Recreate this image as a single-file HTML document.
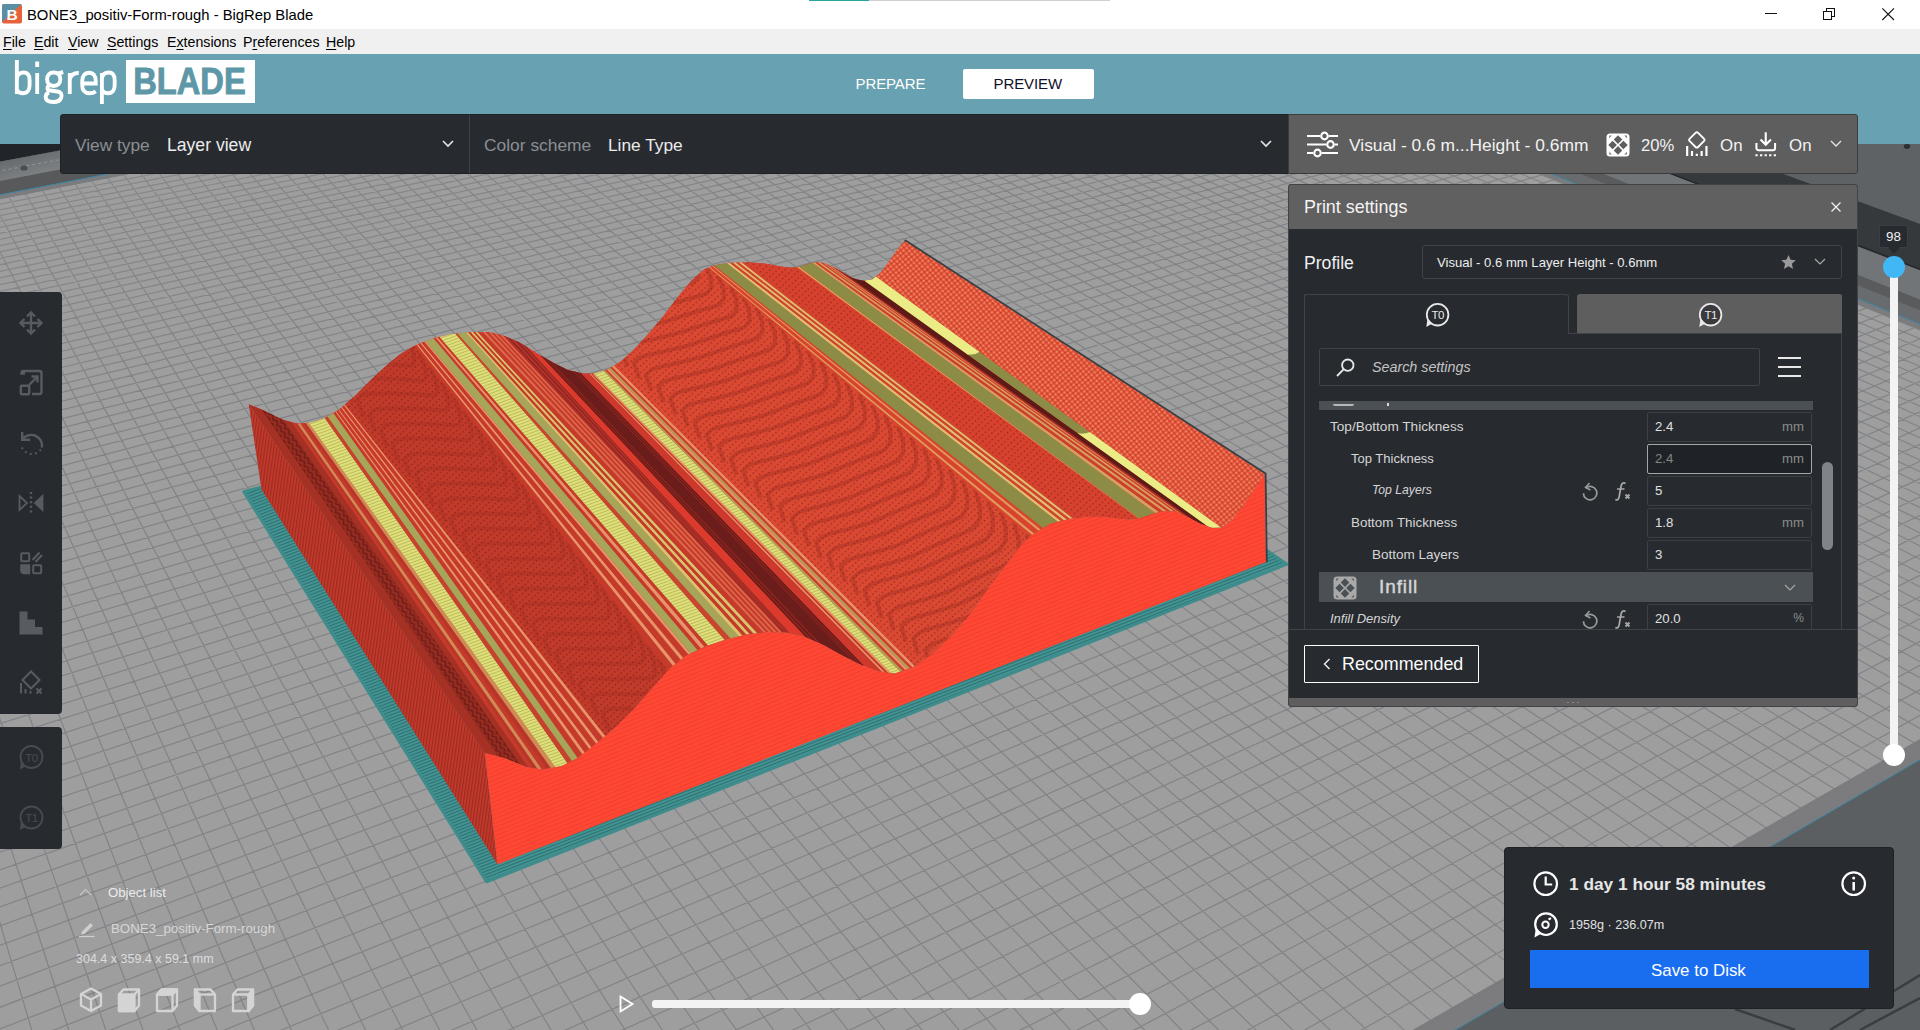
<!DOCTYPE html>
<html><head><meta charset="utf-8"><title>BigRep Blade</title>
<style>
*{box-sizing:border-box;margin:0;padding:0}
html,body{width:1920px;height:1030px;overflow:hidden;background:#9a9a9a;font-family:"Liberation Sans",sans-serif;}
.abs{position:absolute}
#titlebar{position:absolute;left:0;top:0;width:1920px;height:29px;background:#fff}
#titlebar .ttl{position:absolute;left:27px;top:6.5px;font-size:14.8px;color:#000;white-space:nowrap}
#menubar{position:absolute;left:0;top:29px;width:1920px;height:25px;background:#f0f0f0;font-size:14.2px;color:#000}
#menubar span{position:absolute;top:5px;white-space:nowrap}
#menubar u{text-decoration-thickness:1px;text-underline-offset:2px}
#header{position:absolute;left:0;top:54px;width:1920px;height:90px;background:#68a1b1}
#scene{position:absolute;left:0;top:144px;width:1920px;height:886px;overflow:hidden}
.dark{background:#272b30}
.t{position:absolute;white-space:nowrap}
#viewbar{position:absolute;left:60px;top:114px;width:1229px;height:60px;background:#272b30;border-radius:3px 0 0 3px;border:1px solid #1f2327}
#setupbar{position:absolute;left:1288px;top:114px;width:570px;height:60px;background:#5e5e5e;border:1px solid #3c3c3c;border-radius:0 3px 3px 0}
#ps{position:absolute;left:1288px;top:184px;width:570px;height:523px;background:#272b30;border:1px solid #404448;border-radius:3px;overflow:hidden}
#pshead{position:absolute;left:0;top:0;width:570px;height:44px;background:#606060}
#tools{position:absolute;left:0;top:292px;width:62px;height:422px;background:#272b30;border-radius:0 4px 4px 0}
#tools2{position:absolute;left:0;top:727px;width:62px;height:122px;background:#272b30;border-radius:0 4px 4px 0}
#save{position:absolute;left:1504px;top:847px;width:390px;height:162px;background:#272b30;border-radius:4px;border:1px solid #1e2226}
.row{position:absolute;left:0;width:570px;height:32px}
.row .lbl{position:absolute;top:8px;font-size:13.2px;color:#d6d6d6;white-space:nowrap}
.row .box{position:absolute;left:358px;top:1px;width:165px;height:30px;border:1px solid #3c4045;border-radius:2px;background:#272b30}
.row .val{position:absolute;left:366px;top:8px;font-size:13.2px;color:#e0e0e0}
.row .unit{position:absolute;right:55px;top:8px;font-size:13.2px;color:#8c8c8c}
</style></head><body>
<svg id="scn" width="1920" height="1030" viewBox="0 0 1920 1030" style="position:absolute;left:0;top:0">
<defs><clipPath id="cpPlate"><polygon points="69.9,1835.9 2360.5,503.4 1085.4,-15.8 -272.2,247.7"/></clipPath>
<linearGradient id="gFar" gradientUnits="userSpaceOnUse" x1="0" y1="160" x2="6" y2="182"><stop offset="0" stop-color="#66696b"/><stop offset="1" stop-color="#7d8082"/></linearGradient>
</defs>
<rect width="1920" height="1030" fill="#5c5f62"/>
<polygon points="-697.7,291.7 1283.1,-77.6 1283.1,-300 -697.7,-300" fill="#212529"/>
<polygon points="-703.8,315.9 1184.3,-44.7 1158.1,-54.2 -697.7,291.7" fill="url(#gFar)"/>
<polygon points="-707.9,332.6 1157.4,-29.5 1139.2,-36.5 -703.6,315.3" fill="#57595b"/>
<path d="M-150.7 199.3L347.1 105.5" stroke="#9a9c9e" stroke-width="0.8" stroke-dasharray="3 3"/>
<ellipse cx="24" cy="168" rx="3.6" ry="2.6" fill="#4a4d50"/>
<polygon points="2887.1,577.2 3230.6,287.5 1333.1,-192.3 942,-133.1" fill="#5e6264"/>
<polygon points="2835.5,620.8 2887.1,577.2 1052.1,-93 1000.1,-84.2" fill="#35393c"/>
<polygon points="2833.7,622.3 2836.4,620.1 1001,-84.3 998.4,-83.9" fill="#24282c"/>
<polygon points="2801.4,649.6 2834.2,621.9 1059.4,-60.7 1026.8,-54.8" fill="#727577"/>
<polygon points="2789.4,659.7 2801.4,649.6 1058.6,-42.2 1046.7,-40" fill="#595b5d"/>
<polygon points="2774.3,672.5 2789.8,659.4 1053.6,-37.5 1038.4,-34.6" fill="#696c6e"/>
<ellipse cx="1907" cy="146.500" rx="3.200" ry="2.400" fill="#2c3034"/>
<path d="M1735 1009l60 21M1830 1030L1920 975M1860 1030l60 -32" stroke="#3a3d40" stroke-width="2.500" fill="none"/>
<polygon points="69.9,1835.9 2360.5,503.4 1085.4,-15.8 -272.2,247.7" fill="#7c7c7e" stroke="#3c86a6" stroke-width="1"/>
<polygon points="98.9,1783.1 2336.5,500.3 1084.8,-12.3 -257,249.5" fill="#9e9e9f"/>
<path d="M101.4 1817.6L-259.9 245.3M149 1789.9L-241.1 241.7M195.5 1762.8L-222.4 238M240.9 1736.4L-203.9 234.4M285.4 1710.5L-185.6 230.9M328.9 1685.2L-167.4 227.3M371.5 1660.4L-149.3 223.8M413.3 1636.2L-131.4 220.4M454.1 1612.4L-113.6 216.9M494.1 1589.1L-95.9 213.5M533.3 1566.3L-78.4 210.1M571.7 1544L-61.1 206.7M609.3 1522.1L-43.8 203.4M646.2 1500.7L-26.7 200.1M682.3 1479.6L-9.8 196.8M717.8 1459L7 193.5M752.6 1438.8L23.7 190.3M786.7 1418.9L40.3 187M820.1 1399.5L56.8 183.9M853 1380.4L73.1 180.7M885.2 1361.6L89.3 177.5M916.9 1343.2L105.3 174.4M947.9 1325.1L121.3 171.3M978.4 1307.4L137.1 168.3M1008.4 1289.9L152.8 165.2M1037.9 1272.8L168.4 162.2M1066.8 1256L183.9 159.2M1095.2 1239.4L199.3 156.2M1123.1 1223.2L214.5 153.2M1150.6 1207.2L229.7 150.3M1177.6 1191.5L244.7 147.4M1204.1 1176.1L259.6 144.5M1230.2 1160.9L274.4 141.6M1255.9 1146L289.1 138.8M1281.1 1131.3L303.7 135.9M1305.9 1116.9L318.2 133.1M1330.4 1102.6L332.6 130.3M1354.4 1088.7L346.9 127.5M1378.1 1074.9L361.1 124.8M1401.3 1061.3L375.2 122.1M1424.3 1048L389.2 119.3M1446.8 1034.9L403.1 116.6M1469.1 1022L416.8 114M1490.9 1009.2L430.5 111.3M1512.5 996.7L444.1 108.7M1533.7 984.3L457.6 106.1M1554.6 972.2L471.1 103.4M1575.2 960.2L484.4 100.9M1595.5 948.4L497.6 98.3M1615.5 936.7L510.7 95.7M1635.2 925.3L523.8 93.2M1654.7 914L536.7 90.7M1673.8 902.8L549.6 88.2M1692.7 891.9L562.4 85.7M1711.3 881L575.1 83.3M1729.7 870.3L587.7 80.8M1747.8 859.8L600.2 78.4M1765.6 849.4L612.7 76M1783.2 839.2L625 73.6M1800.6 829.1L637.3 71.2M1817.7 819.1L649.5 68.8M1834.6 809.3L661.6 66.5M1851.3 799.6L673.7 64.1M1867.8 790L685.6 61.8M1884 780.6L697.5 59.5M1900 771.2L709.3 57.2M1915.9 762L721.1 54.9M1931.5 753L732.7 52.7M1946.9 744L744.3 50.4M1962.1 735.1L755.8 48.2M1977.1 726.4L767.2 46M1992 717.8L778.6 43.8M2006.6 709.2L789.9 41.6M2021.1 700.8L801.1 39.4M2035.4 692.5L812.2 37.2M2049.5 684.3L823.3 35.1M2063.5 676.2L834.3 33M2077.2 668.2L845.3 30.8M2090.8 660.2L856.1 28.7M2104.3 652.4L866.9 26.6M2117.6 644.7L877.7 24.5M2130.7 637.1L888.3 22.5M2143.7 629.5L898.9 20.4M2156.5 622L909.5 18.4M2169.2 614.7L919.9 16.3M2181.7 607.4L930.4 14.3M2194.1 600.2L940.7 12.3M2206.3 593.1L951 10.3M2218.4 586L961.2 8.3M2230.4 579.1L971.4 6.4M2242.3 572.2L981.5 4.4M2254 565.4L991.5 2.4M2265.5 558.6L1001.5 0.5M2277 552L1011.4 -1.4M2288.3 545.4L1021.3 -3.3M2299.5 538.9L1031.1 -5.2M2310.6 532.4L1040.8 -7.1M2321.5 526.1L1050.5 -9M2332.3 519.8L1060.1 -10.9M2343.1 513.5L1069.7 -12.7M2353.7 507.4L1079.2 -14.6M63.9 1807.9L2345.7 497.3M54.9 1766.1L2323.1 488.2M46.2 1725.7L2301 479.1M37.8 1686.6L2279.2 470.3M29.6 1648.8L2257.7 461.5M21.7 1612.2L2236.6 452.9M14.1 1576.7L2215.8 444.5M6.7 1542.4L2195.3 436.1M-0.5 1509.1L2175.1 427.9M-7.4 1476.7L2155.2 419.8M-14.2 1445.4L2135.6 411.8M-20.8 1414.9L2116.3 404M-27.1 1385.4L2097.3 396.2M-33.3 1356.6L2078.6 388.6M-39.3 1328.7L2060.2 381.1M-45.2 1301.5L2042 373.7M-50.9 1275.1L2024 366.4M-56.4 1249.4L2006.4 359.2M-61.8 1224.3L1988.9 352.1M-67.1 1199.9L1971.7 345.1M-72.2 1176.2L1954.8 338.2M-77.2 1153L1938.1 331.4M-82.1 1130.4L1921.6 324.7M-86.8 1108.4L1905.4 318.1M-91.4 1086.9L1889.3 311.5M-95.9 1066L1873.5 305.1M-100.3 1045.5L1857.9 298.7M-104.7 1025.5L1842.5 292.5M-108.9 1006L1827.3 286.3M-113 986.9L1812.3 280.2M-117 968.3L1797.5 274.2M-120.9 950.1L1782.9 268.2M-124.7 932.3L1768.4 262.3M-128.5 914.9L1754.2 256.5M-132.2 897.9L1740.1 250.8M-135.7 881.2L1726.3 245.2M-139.3 864.9L1712.5 239.6M-142.7 848.9L1699 234.1M-146.1 833.3L1685.6 228.6M-149.4 818L1672.4 223.2M-152.6 803L1659.4 217.9M-155.8 788.3L1646.5 212.7M-158.9 773.9L1633.8 207.5M-161.9 759.8L1621.2 202.4M-164.9 746L1608.7 197.3M-167.8 732.4L1596.5 192.3M-170.7 719.1L1584.3 187.4M-173.5 706.1L1572.3 182.5M-176.2 693.3L1560.5 177.7M-178.9 680.7L1548.7 172.9M-181.6 668.4L1537.2 168.2M-184.2 656.3L1525.7 163.5M-186.8 644.4L1514.4 158.9M-189.3 632.8L1503.2 154.3M-191.7 621.3L1492.1 149.8M-194.2 610L1481.2 145.4M-196.5 599L1470.4 141M-198.9 588.1L1459.7 136.6M-201.2 577.5L1449.1 132.3M-203.4 567L1438.6 128M-205.7 556.7L1428.2 123.8M-207.9 546.5L1418 119.6M-210 536.5L1407.9 115.5M-212.1 526.7L1397.8 111.4M-214.2 517.1L1387.9 107.4M-216.2 507.6L1378.1 103.4M-218.2 498.3L1368.4 99.5M-220.2 489.1L1358.8 95.5M-222.2 480.1L1349.3 91.7M-224.1 471.2L1339.9 87.8M-226 462.4L1330.6 84M-227.8 453.8L1321.3 80.3M-229.7 445.3L1312.2 76.6M-231.5 436.9L1303.2 72.9M-233.2 428.7L1294.3 69.3M-235 420.6L1285.4 65.7M-236.7 412.6L1276.6 62.1M-238.4 404.8L1268 58.6M-240.1 397L1259.4 55.1M-241.7 389.4L1250.9 51.6M-243.3 381.9L1242.5 48.2M-244.9 374.4L1234.1 44.8M-246.5 367.1L1225.9 41.4M-248.1 359.9L1217.7 38.1M-249.6 352.8L1209.6 34.8M-251.1 345.8L1201.6 31.5M-252.6 338.9L1193.6 28.3M-254.1 332.1L1185.8 25.1M-255.5 325.4L1178 21.9M-256.9 318.7L1170.3 18.8M-258.3 312.2L1162.6 15.7M-259.7 305.8L1155 12.6M-261.1 299.4L1147.5 9.5M-262.5 293.1L1140.1 6.5M-263.8 286.9L1132.7 3.5M-265.1 280.8L1125.4 0.5M-266.4 274.8L1118.2 -2.4M-267.7 268.8L1111 -5.3M-269 262.9L1103.9 -8.2M-270.2 257.1L1096.9 -11.1M-271.4 251.4L1089.9 -13.9" stroke="#797b7e" stroke-opacity=".78" stroke-width="1.200" fill="none" clip-path="url(#cpPlate)"/>
<linearGradient id="gFade" gradientUnits="userSpaceOnUse" x1="0" y1="150" x2="60" y2="430"><stop offset="0" stop-color="#9c9c9d" stop-opacity=".2"/><stop offset="1" stop-color="#9c9c9d" stop-opacity="0"/></linearGradient>
<polygon points="98.9,1783.1 2336.5,500.3 1084.8,-12.3 -257,249.5" fill="url(#gFade)"/>
<defs>
<pattern id="pFront" width="4" height="4" patternUnits="userSpaceOnUse" patternTransform="rotate(-22)"><rect width="4" height="4" fill="#ff4733"/><rect width="4" height="1" fill="#f0402e"/></pattern>
<pattern id="pLeft" width="3" height="3" patternUnits="userSpaceOnUse" patternTransform="rotate(8)"><rect width="3" height="3" fill="#c63a2b"/><rect width="1.300" height="3" fill="#9c2c22"/></pattern>
<pattern id="pTeal" width="3" height="3" patternUnits="userSpaceOnUse" patternTransform="rotate(-21)"><rect width="3" height="3" fill="#449595"/><rect width="3" height="1.100" fill="#2e7070"/></pattern>
<pattern id="pDot" width="5" height="4" patternUnits="userSpaceOnUse" patternTransform="rotate(48)"><rect width="5" height="4" fill="none"/><rect width="1.300" height="1.500" fill="#5a1511" fill-opacity=".55"/></pattern>
<pattern id="pDotL" width="4" height="4" patternUnits="userSpaceOnUse" patternTransform="rotate(50)"><rect width="1.600" height="1.600" fill="#f6b27a" fill-opacity=".75"/><rect x="2" y="2" width="1.300" height="1.300" fill="#7a1c16" fill-opacity=".5"/></pattern>
<pattern id="pYel" width="4" height="3" patternUnits="userSpaceOnUse" patternTransform="rotate(-20)"><rect width="4" height="3" fill="none"/><rect width="4" height="1" fill="#8c8c3a" fill-opacity=".45"/></pattern>
<pattern id="pChev" width="7" height="5" patternUnits="userSpaceOnUse" patternTransform="rotate(56)"><path d="M0 0.500l3.500 3l3.500-3" fill="none" stroke="#5e1814" stroke-width="1.600"/></pattern>
</defs>
<polygon points="486.7,881.9 1286.9,564.2 912.9,305.7 243.8,491.8" fill="url(#pTeal)" stroke="#3f8c8c" stroke-width="3" stroke-linejoin="round"/>
<polygon points="248.7,404.3 484.9,753.1 497.5,864.4 261.5,489.5" fill="url(#pLeft)"/>
<polygon points="248.7,404.3 252.8,406 257,407.6 261.1,409.3 265.2,411.2 269.3,413.2 273.5,415.3 277.6,417.4 281.7,419.3 285.8,420.5 290,421.6 294.1,422.8 298.2,423.6 302.3,423.3 306.5,423 310.6,422.6 314.7,421.4 318.8,420 323,418.6 327.1,416.7 331.2,414.2 335.4,411.8 339.5,409.2 343.6,405.7 347.7,402.1 351.9,398.6 356,394.9 360.1,390.8 364.2,386.6 368.4,382.4 372.5,378.4 376.6,374.6 380.7,370.8 384.9,367 389,363.4 393.1,360 397.3,356.5 401.4,353.3 405.5,351 409.6,348.6 413.8,346.3 417.9,344.2 422,342.6 426.1,341.1 430.3,339.5 434.4,338 438.5,337 442.6,336.1 446.8,335.2 450.9,334.4 455,333.7 459.1,333.3 463.3,332.9 467.4,332.5 471.5,332.1 475.7,332.1 479.8,332.1 483.9,332.1 488,332.1 492.2,332.7 496.3,333.7 500.4,334.7 504.5,335.9 508.7,337.7 512.8,339.5 516.9,341.3 521,343.3 525.2,345.9 529.3,348.5 533.4,351.1 537.5,353.7 541.7,356 545.8,358.4 549.9,360.7 554.1,363 558.2,365.1 562.3,367.2 566.4,369.3 570.6,370.6 574.7,371.6 578.8,372.6 582.9,373.4 587.1,373.5 591.2,373.7 595.3,373.1 599.4,372 603.6,370.8 607.7,369.3 611.8,366.9 616,364.5 620.1,362.1 624.2,358.4 628.3,354.7 632.5,350.9 636.6,346.7 640.7,342.2 644.8,337.7 649,333.2 653.1,328.3 657.2,323.5 661.3,318.7 665.5,313.3 669.6,307.8 673.7,302.4 677.8,297 682,291.8 686.1,287 690.2,282.2 694.4,278 698.5,274.4 702.6,270.7 706.7,268.2 710.9,266.7 715,265.3 719.1,264.3 723.2,263.8 727.4,263.3 731.5,262.8 735.6,262.7 739.7,262.5 743.9,262.4 748,262.3 752.1,262.6 756.2,262.9 760.4,263.3 764.5,263.6 768.6,264.2 772.8,265 776.9,265.8 781,266.5 785.1,267 789.3,267.6 793.4,267.7 797.5,266.9 801.6,266 805.8,264.6 809.9,263.3 814,262.7 818.1,262.5 822.3,262.5 826.4,264.1 830.5,265.7 834.7,267.7 838.8,270.1 842.9,272.5 847,274.9 851.2,277.3 855.3,279 859.4,279.9 863.5,280.8 867.7,280.2 871.8,279.5 875.9,276.6 880,273.3 884.2,268.2 888.3,262.5 892.4,256.7 896.5,250.9 900.7,245.5 904.8,240.6 1264.8,474 1259.9,481.7 1255,488.4 1250.1,495.4 1245.2,502.8 1240.3,509.8 1235.4,515.9 1230.5,521.3 1225.6,524.9 1220.7,527.5 1215.7,527.7 1210.8,527.3 1205.9,525.7 1201,524 1196.1,521.5 1191.2,518.8 1186.3,516.3 1181.4,514 1176.5,511.8 1171.6,511.3 1166.7,511.1 1161.8,511.5 1156.9,512.7 1152,514 1147.1,515.6 1142.2,517.3 1137.3,518.9 1132.4,519.3 1127.5,519.6 1122.6,519 1117.6,518.4 1112.7,517.8 1107.8,517.2 1102.9,517 1098,516.8 1093.1,516.7 1088.2,516.6 1083.3,517.2 1078.4,517.8 1073.5,518.4 1068.6,519.1 1063.7,520.3 1058.8,521.6 1053.9,522.8 1049,524.4 1044.1,527.4 1039.2,530.5 1034.3,533.6 1029.4,537.1 1024.5,542.4 1019.5,547.8 1014.6,553.4 1009.7,559.9 1004.8,566.5 999.9,573.1 995,579.6 990.1,586.1 985.2,592.8 980.3,599.8 975.4,606.8 970.5,613.8 965.6,619.6 960.7,625.2 955.8,630.8 950.9,636.1 946,641 941.1,645.9 936.2,650.8 931.3,655.1 926.4,658.5 921.4,661.9 916.5,665.2 911.6,667.8 906.7,669.5 901.8,671.1 896.9,672.8 892,673.5 887.1,672.6 882.2,671.7 877.3,670.8 872.4,669 867.5,667.1 862.6,665.3 857.7,663.2 852.8,660.8 847.9,658.3 843,655.8 838.1,653.2 833.2,650.4 828.3,647.7 823.3,645 818.4,642.8 813.5,640.6 808.6,638.5 803.7,636.5 798.8,635.4 793.9,634.2 789,633.1 784.1,632.5 779.2,632.3 774.3,632.2 769.4,632.1 764.5,632.5 759.6,633.1 754.7,633.7 749.8,634.2 744.9,634.8 740,636.1 735.1,637.4 730.2,638.7 725.2,640 720.3,641.4 715.4,643.1 710.5,644.7 705.6,646.4 700.7,648.5 695.8,650.9 690.9,653.4 686,655.8 681.1,659.5 676.2,663.4 671.3,667.3 666.4,672.2 661.5,677.8 656.6,683.4 651.7,688.9 646.8,694.5 641.9,700 637,705.5 632.1,710.6 627.1,715.6 622.2,720.5 617.3,725.4 612.4,729.7 607.5,734 602.6,738.3 597.7,742.6 592.8,746.4 587.9,750.2 583,754 578.1,757.8 573.2,760.4 568.3,762.8 563.4,765.3 558.5,766.7 553.6,767.6 548.7,768.6 543.8,769.5 538.9,769 534,768.3 529,767.6 524.1,766 519.2,764.1 514.3,762.1 509.4,760.1 504.5,758.1 499.6,756.9 494.7,755.6 489.8,754.4 484.9,753.1" fill="#d0412e"/>
<polygon points="248.7,404.3 253.5,406.2 258.3,408.2 263.1,410.1 267.9,412.5 272.8,415 277.6,417.4 282.4,419.5 287.2,420.9 292,422.2 528.5,767.5 523.7,765.8 518.8,763.9 514,761.9 509.1,760 504.3,758.1 499.4,756.8 494.6,755.6 489.7,754.3 484.9,753.1" fill="#a53125"/>
<polygon points="292,422.2 294.8,423 533,768.1 528.5,767.5" fill="#c43a2b"/>
<polygon points="294.8,423 297.6,423.7 537.5,768.8 533,768.1" fill="#b83629"/>
<polygon points="297.6,423.7 300.4,423.5 542,769.4 537.5,768.8" fill="#cf8a55"/>
<polygon points="300.4,423.5 303.1,423.2 546.4,769 542,769.4" fill="#c43a2b"/>
<polygon points="303.1,423.2 305.9,423 550.9,768.1 546.4,769" fill="#b83629"/>
<polygon points="305.9,423 308.7,422.8 555.4,767.3 550.9,768.1" fill="#cf8a55"/>
<polygon points="308.7,422.8 312.7,422 316.8,420.7 320.8,419.3 324.8,418 567.5,763.2 564.4,764.7 561.4,766.1 558.4,766.7 555.4,767.3" fill="#e0e07a"/>
<polygon points="324.8,418 327.5,416.4 572,761 567.5,763.2" fill="#c5422f"/>
<polygon points="327.5,416.4 330.5,414.7 333.5,412.9 577.9,757.9 574.9,759.5 572,761" fill="#a6a55a"/>
<polygon points="333.5,412.9 334.5,412.4 580.2,756.2 577.9,757.9" fill="#c43a2b"/>
<polygon points="334.5,412.4 335.4,411.8 582.5,754.4 580.2,756.2" fill="#c43a2b"/>
<polygon points="335.4,411.8 336.4,411.2 584.8,752.6 582.5,754.4" fill="#e8946a"/>
<polygon points="336.4,411.2 337.3,410.7 587.1,750.8 584.8,752.6" fill="#c43a2b"/>
<polygon points="337.3,410.7 338.3,410.1 589.4,749.1 587.1,750.8" fill="#c43a2b"/>
<polygon points="338.3,410.1 339.2,409.4 591.6,747.3 589.4,749.1" fill="#e8946a"/>
<polygon points="339.2,409.4 340.2,408.5 593.9,745.5 591.6,747.3" fill="#c43a2b"/>
<polygon points="340.2,408.5 341.2,407.7 596.2,743.7 593.9,745.5" fill="#c43a2b"/>
<polygon points="341.2,407.7 342.1,406.9 598.5,741.9 596.2,743.7" fill="#e8946a"/>
<polygon points="342.1,406.9 343.1,406.1 600.8,739.9 598.5,741.9" fill="#c43a2b"/>
<polygon points="343.1,406.1 344,405.3 603.1,737.9 600.8,739.9" fill="#c43a2b"/>
<polygon points="344,405.3 345,404.5 605.4,735.9 603.1,737.9" fill="#e8946a"/>
<polygon points="345,404.5 349.9,400.3 354.9,396 359.8,391.1 364.7,386.1 369.6,381.2 374.6,376.5 379.5,372 384.4,367.4 389.4,363.1 394.3,359 399.2,354.9 404.1,351.8 409.1,348.9 414,346.1 668,670.4 663.5,675.5 659.1,680.6 654.6,685.6 650.1,690.7 645.6,695.7 641.2,700.8 636.7,705.8 632.2,710.5 627.7,715 623.3,719.4 618.8,723.9 614.3,728.1 609.8,732 605.4,735.9" fill="#c13a2a"/>
<polygon points="414,346.1 415.3,345.4 670.5,667.9 668,670.4" fill="#c43a2b"/>
<polygon points="415.3,345.4 416.6,344.7 673.1,665.9 670.5,667.9" fill="#c43a2b"/>
<polygon points="416.6,344.7 417.9,344.2 675.6,663.8 673.1,665.9" fill="#e8946a"/>
<polygon points="417.9,344.2 419.2,343.7 678.2,661.8 675.6,663.8" fill="#c43a2b"/>
<polygon points="419.2,343.7 420.4,343.2 680.7,659.8 678.2,661.8" fill="#c43a2b"/>
<polygon points="420.4,343.2 421.7,342.7 683.3,657.8 680.7,659.8" fill="#e8946a"/>
<polygon points="421.7,342.7 423,342.2 685.8,655.9 683.3,657.8" fill="#c43a2b"/>
<polygon points="423,342.2 424.3,341.8 688.4,654.6 685.8,655.9" fill="#c43a2b"/>
<polygon points="424.3,341.8 425.6,341.3 690.9,653.4 688.4,654.6" fill="#e8946a"/>
<polygon points="425.6,341.3 429.6,339.8 433.6,338.3 697.6,650.1 694.2,651.7 690.9,653.4" fill="#a6a55a"/>
<polygon points="433.6,338.3 435.5,337.6 701,648.4 697.6,650.1" fill="#c43a2b"/>
<polygon points="435.5,337.6 437.5,337.2 704.5,646.8 701,648.4" fill="#e8946a"/>
<polygon points="437.5,337.2 439.4,336.8 708,645.6 704.5,646.8" fill="#c43a2b"/>
<polygon points="439.4,336.8 443.4,336 447.4,335.1 451.4,334.3 455.4,333.7 724.8,640.1 720.6,641.3 716.4,642.7 712.2,644.1 708,645.6" fill="#e0e07a"/>
<polygon points="455.4,333.7 457.5,333.5 730.5,638.6 724.8,640.1" fill="#c8452f"/>
<polygon points="457.5,333.5 461.8,333.1 466,332.6 738.9,636.4 734.7,637.5 730.5,638.6" fill="#a6a55a"/>
<polygon points="466,332.6 468.3,332.4 742.6,635.4 738.9,636.4" fill="#d8c46e"/>
<polygon points="468.3,332.4 470.7,332.2 746.3,634.6 742.6,635.4" fill="#c43a2b"/>
<polygon points="470.7,332.2 473,332.1 750,634.2 746.3,634.6" fill="#d8c46e"/>
<polygon points="473,332.1 475.3,332.1 753.7,633.8 750,634.2" fill="#c43a2b"/>
<polygon points="475.3,332.1 477.7,332.1 757.4,633.3 753.7,633.8" fill="#d8c46e"/>
<polygon points="477.7,332.1 480,332.1 761.1,632.9 757.4,633.3" fill="#c43a2b"/>
<polygon points="480,332.1 482.9,332.1 763.7,632.6 761.1,632.9" fill="#c53a2b"/>
<polygon points="482.9,332.1 485.8,332.1 766.3,632.3 763.7,632.6" fill="#dc6a4c"/>
<polygon points="485.8,332.1 488.6,332.1 768.9,632.1 766.3,632.3" fill="#c53a2b"/>
<polygon points="488.6,332.1 491.5,332.5 771.5,632.2 768.9,632.1" fill="#dc6a4c"/>
<polygon points="491.5,332.5 494.4,333.2 774.2,632.2 771.5,632.2" fill="#c53a2b"/>
<polygon points="494.4,333.2 497.2,333.9 776.8,632.3 774.2,632.2" fill="#dc6a4c"/>
<polygon points="497.2,333.9 500.1,334.7 779.4,632.3 776.8,632.3" fill="#c53a2b"/>
<polygon points="500.1,334.7 503,335.4 782,632.4 779.4,632.3" fill="#dc6a4c"/>
<polygon points="503,335.4 507,337 783.3,632.4 782,632.4" fill="#b3302a"/>
<polygon points="507,337 511,338.7 784.7,632.5 783.3,632.4" fill="#8a2621"/>
<polygon points="511,338.7 515,340.4 786,632.5 784.7,632.5" fill="#b3302a"/>
<polygon points="515,340.4 519,342.1 787.3,632.7 786,632.5" fill="#8a2621"/>
<polygon points="519,342.1 523,344.5 788.7,633 787.3,632.7" fill="#b3302a"/>
<polygon points="523,344.5 527,347.1 790,633.3 788.7,633" fill="#8a2621"/>
<polygon points="527,347.1 531.7,350 536.3,352.9 541,355.7 806,637.3 800.7,635.8 795.3,634.6 790,633.3" fill="#dd3a2e"/>
<polygon points="541,355.7 545.4,358.2 549.9,360.7 554.3,363.2 558.8,365.4 563.2,367.6 567.7,369.9 572.1,371 576.6,372.1 581,373.2 864,665.8 857.6,663.2 851.1,659.9 844.7,656.7 838.2,653.3 831.8,649.7 825.3,646.1 818.9,642.9 812.4,640.1 806,637.3" fill="#6a1d1a"/>
<polygon points="541,355.7 543.5,357.1 809.6,638.9 806,637.3" fill="#6a1d1a"/>
<polygon points="543.5,357.1 546,358.5 813.2,640.5 809.6,638.9" fill="#8e2722"/>
<polygon points="546,358.5 548.5,359.9 816.9,642.1 813.2,640.5" fill="#6a1d1a"/>
<polygon points="548.5,359.9 551,361.3 820.5,643.7 816.9,642.1" fill="#8e2722"/>
<polygon points="573,371.2 575,371.7 855.3,662 852.4,660.6" fill="#8e2722"/>
<polygon points="575,371.7 577,372.2 858.2,663.5 855.3,662" fill="#6a1d1a"/>
<polygon points="577,372.2 579,372.7 861.1,664.8 858.2,663.5" fill="#8e2722"/>
<polygon points="579,372.7 581,373.2 864,665.8 861.1,664.8" fill="#6a1d1a"/>
<polygon points="581,373.2 585.3,373.5 589.7,373.7 594,373.5 891.1,673.3 882.1,671.7 873,669.2 864,665.8" fill="#cf382c"/>
<polygon points="588.1,373.6 589.6,373.7 882,671.7 878.9,671.2" fill="#c43a2b"/>
<polygon points="589.6,373.7 591.1,373.7 885,672.2 882,671.7" fill="#e8946a"/>
<polygon points="591.1,373.7 592.5,373.8 888.1,672.8 885,672.2" fill="#c43a2b"/>
<polygon points="592.5,373.8 594,373.5 891.1,673.3 888.1,672.8" fill="#e8946a"/>
<polygon points="594,373.5 598.8,372.1 603.5,370.8 900.3,671.6 895.7,673.2 891.1,673.3" fill="#e0e07a"/>
<polygon points="603.5,370.8 605.2,370.3 902.8,670.8 900.3,671.6" fill="#b0a055"/>
<polygon points="605.2,370.3 607,369.7 905.2,670 902.8,670.8" fill="#c9412e"/>
<polygon points="607,369.7 608.8,368.7 907.7,669.2 905.2,670" fill="#e8946a"/>
<polygon points="608.8,368.7 610.5,367.7 910.1,668.3 907.7,669.2" fill="#b0a055"/>
<polygon points="610.5,367.7 612.2,366.7 912.6,667.5 910.1,668.3" fill="#c9412e"/>
<polygon points="612.2,366.7 614,365.6 915,666.3 912.6,667.5" fill="#e8946a"/>
<polygon points="614,365.6 618.9,362.7 623.9,358.7 628.8,354.2 633.8,349.7 638.7,344.4 643.7,339 648.6,333.5 653.6,327.8 658.5,322 663.5,315.9 668.4,309.3 673.4,302.9 678.3,296.4 683.3,290.3 688.2,284.6 693.2,279 698.1,274.7 703.1,270.3 708,267.7 1030,536.4 1023.9,543 1017.9,549.5 1011.8,557.1 1005.8,565.2 999.7,573.3 993.7,581.4 987.6,589.4 981.6,598 975.5,606.6 969.5,615.2 963.4,622.1 957.4,629 951.3,635.7 945.3,641.7 939.2,647.8 933.2,653.8 927.1,657.9 921.1,662.1 915,666.3" fill="#dc4933"/>
<polygon points="708,267.7 709.1,267.4 1032.2,534.9 1030,536.4" fill="#d9442f"/>
<polygon points="709.1,267.4 710.2,267 1034.3,533.5 1032.2,534.9" fill="#e09a5c"/>
<polygon points="710.2,267 711.2,266.6 1036.5,532.2 1034.3,533.5" fill="#d9442f"/>
<polygon points="711.2,266.6 712.3,266.2 1038.6,530.8 1036.5,532.2" fill="#d9442f"/>
<polygon points="712.3,266.2 713.4,265.8 1040.8,529.5 1038.6,530.8" fill="#e09a5c"/>
<polygon points="713.4,265.8 714.5,265.4 1042.9,528.1 1040.8,529.5" fill="#d9442f"/>
<polygon points="714.5,265.4 718.7,264.4 722.8,263.8 727,263.3 1058,521.8 1053,523 1048,525 1042.9,528.1" fill="#8c8c46"/>
<polygon points="727,263.3 730,262.9 1061,521 1058,521.8" fill="#dfc070"/>
<polygon points="730,262.9 733,262.7 1064,520.2 1061,521" fill="#cf4530"/>
<polygon points="733,262.7 736,262.7 1067,519.5 1064,520.2" fill="#dfc070"/>
<polygon points="736,262.7 739,262.6 1070,518.8 1067,519.5" fill="#cf4530"/>
<polygon points="739,262.6 742,262.5 1073,518.4 1070,518.8" fill="#dfc070"/>
<polygon points="742,262.5 745,262.4 1076,518.1 1073,518.4" fill="#cf4530"/>
<polygon points="745,262.4 749.5,262.4 754.1,262.8 758.6,263.1 763.2,263.5 767.7,264.1 772.3,264.9 776.8,265.7 781.4,266.5 785.9,267.2 790.5,267.8 795,267.4 1138,518.7 1132.4,519.3 1126.7,519.5 1121.1,518.8 1115.5,518.1 1109.8,517.4 1104.2,517.1 1098.5,516.9 1092.9,516.6 1087.3,516.7 1081.6,517.4 1076,518.1" fill="#d8412e"/>
<polygon points="795,267.4 797,267 1138.6,518.5 1138,518.7" fill="#d9442f"/>
<polygon points="797,267 799,266.6 1139.1,518.3 1138.6,518.5" fill="#e0a060"/>
<polygon points="799,266.6 803.5,265.4 808,263.9 812.5,262.7 1155.3,513.1 1149.9,514.7 1144.5,516.5 1139.1,518.3" fill="#8c8c46"/>
<polygon points="812.5,262.7 815.2,262.6 1159.2,512.1 1155.3,513.1" fill="#d6a060"/>
<polygon points="815.2,262.6 817.9,262.5 1163,511.2 1159.2,512.1" fill="#cc3f2d"/>
<polygon points="817.9,262.5 820.6,262.4 1166.8,511.1 1163,511.2" fill="#d6a060"/>
<polygon points="820.6,262.4 823.2,262.9 1170.7,511.3 1166.8,511.1" fill="#cc3f2d"/>
<polygon points="823.2,262.9 825.9,263.9 1174.5,511.5 1170.7,511.3" fill="#d6a060"/>
<polygon points="825.9,263.9 828.6,264.9 1178.3,512.6 1174.5,511.5" fill="#cc3f2d"/>
<polygon points="828.6,264.9 831.3,266 1182.2,514.4 1178.3,512.6" fill="#d6a060"/>
<polygon points="831.3,266 834,267.3 1186,516.1 1182.2,514.4" fill="#cc3f2d"/>
<polygon points="834,267.3 838.2,269.8 842.5,272.3 846.8,274.8 851,277.2 1198,522.5 1195,520.9 1192,519.2 1189,517.6 1186,516.1" fill="#c03a2c"/>
<polygon points="842.5,272.3 846.9,274.8 851.3,277.4 855.7,279 860.1,280 864.5,280.7 1208,526.4 1204.8,525.3 1201.6,524.2 1198.4,522.7 1195.2,521 1192,519.2" fill="#5e1a17"/>
<polygon points="834,267.3 838.2,269.8 842.5,272.3 1192,519.2 1189,517.6 1186,516.1" fill="#8f2a22"/>
<polygon points="864.5,280.7 868.3,280.1 872.2,279.4 876,276.5 1221.2,527.5 1216.8,527.7 1212.4,527.8 1208,526.4" fill="#8c8c46"/>
<polygon points="864.5,280.7 868.3,280.1 872.2,279.4 876,276.5 979.6,351.8 975.6,353.9 971.6,354.4 967.6,354.4" fill="#ecec86"/>
<polygon points="1077.5,433 1081.7,433.7 1085.9,433.3 1090.1,432.1 1221.2,527.5 1216.8,527.7 1212.4,527.8 1208,526.4" fill="#ecec86"/>
<polygon points="876,276.5 880.8,272.7 885.6,266.2 890.4,259.5 895.2,252.8 900,246.3 904.8,240.6 1264.8,474 1257.5,484.9 1250.3,495.1 1243,506 1235.8,515.4 1228.5,522.7 1221.2,527.5" fill="#e3523a"/>
<polygon points="876,276.5 878.6,274.5 881.2,272.3 883.9,268.7 886.5,265 889.1,261.3 891.7,257.7 894.3,254 896.9,250.3 899.6,246.8 902.2,243.7 904.8,240.6 1264.8,474 1260.8,480.4 1256.9,485.8 1252.9,491.3 1249,497.1 1245,503 1241,508.8 1237.1,513.8 1233.1,518.7 1229.2,522.2 1225.2,525.2 1221.2,527.5" fill="url(#pDotL)"/>
<polygon points="345,404.5 347.4,402.4 349.8,400.4 352.1,398.4 354.5,396.4 356.9,394 359.3,391.6 361.7,389.2 364,386.8 366.4,384.4 368.8,382 371.2,379.7 373.6,377.5 375.9,375.3 378.3,373.1 380.7,370.9 383.1,368.7 385.4,366.5 387.8,364.4 390.2,362.4 392.6,360.4 395,358.4 397.3,356.4 399.7,354.5 402.1,352.9 404.5,351.6 406.9,350.2 409.2,348.8 411.6,347.5 414,346.1 668,670.4 665.8,672.8 663.7,675.3 661.5,677.8 659.4,680.2 657.2,682.7 655,685.1 652.9,687.6 650.7,690 648.6,692.4 646.4,694.9 644.2,697.3 642.1,699.7 639.9,702.2 637.8,704.6 635.6,707 633.4,709.3 631.3,711.4 629.1,713.6 627,715.7 624.8,717.9 622.6,720.1 620.5,722.2 618.3,724.4 616.2,726.5 614,728.4 611.8,730.2 609.7,732.1 607.5,734 605.4,735.9" fill="url(#pDot)"/>
<polygon points="614,365.6 616.4,364.2 618.8,362.8 621.2,361.1 623.6,358.9 626.1,356.7 628.5,354.5 630.9,352.3 633.3,350.1 635.7,347.7 638.1,345.1 640.5,342.4 642.9,339.8 645.3,337.2 647.7,334.6 650.2,331.8 652.6,329 655,326.1 657.4,323.3 659.8,320.5 662.2,317.6 664.6,314.4 667,311.2 669.4,308 671.8,304.9 674.3,301.7 676.7,298.5 679.1,295.4 681.5,292.4 683.9,289.6 686.3,286.8 688.7,284 691.1,281.2 693.5,278.7 695.9,276.6 698.4,274.5 700.8,272.4 703.2,270.2 705.6,268.6 708,267.7 1030,536.4 1027.1,539.6 1024.1,542.8 1021.2,546 1018.2,549.2 1015.3,552.6 1012.3,556.5 1009.4,560.5 1006.4,564.4 1003.5,568.3 1000.5,572.3 997.6,576.2 994.6,580.1 991.7,584 988.7,588 985.8,592 982.8,596.2 979.9,600.4 976.9,604.6 974,608.8 971,613 968.1,616.8 965.1,620.1 962.2,623.5 959.2,626.9 956.3,630.2 953.3,633.6 950.4,636.6 947.4,639.6 944.5,642.5 941.5,645.5 938.6,648.4 935.6,651.4 932.7,654.1 929.7,656.1 926.8,658.2 923.8,660.2 920.9,662.2 917.9,664.3 915,666.3" fill="url(#pDot)"/>
<polygon points="745,262.4 747.6,262.3 750.3,262.4 752.9,262.7 755.5,262.9 758.2,263.1 760.8,263.3 763.4,263.5 766.1,263.7 768.7,264.2 771.3,264.7 773.9,265.2 776.6,265.7 779.2,266.2 781.8,266.6 784.5,267 787.1,267.3 789.7,267.7 792.4,267.9 795,267.4 1138,518.7 1134.7,519.1 1131.5,519.3 1128.2,519.6 1124.9,519.3 1121.7,518.9 1118.4,518.5 1115.2,518.1 1111.9,517.7 1108.6,517.3 1105.4,517.1 1102.1,517 1098.8,516.9 1095.6,516.7 1092.3,516.6 1089.1,516.5 1085.8,516.9 1082.5,517.3 1079.3,517.7 1076,518.1" fill="url(#pDot)"/>
<polygon points="308.7,422.8 312.7,422 316.8,420.7 320.8,419.3 324.8,418 567.5,763.2 564.4,764.7 561.4,766.1 558.4,766.7 555.4,767.3" fill="url(#pYel)"/>
<polygon points="439.4,336.8 443.4,336 447.4,335.1 451.4,334.3 455.4,333.7 724.8,640.1 720.6,641.3 716.4,642.7 712.2,644.1 708,645.6" fill="url(#pYel)"/>
<polygon points="594,373.5 598.8,372.1 603.5,370.8 900.3,671.6 895.7,673.2 891.1,673.3" fill="url(#pYel)"/>
<clipPath id="cpA2"><polygon points="614,365.6 616.4,364.2 618.8,362.8 621.2,361.1 623.6,358.9 626.1,356.7 628.5,354.5 630.9,352.3 633.3,350.1 635.7,347.7 638.1,345.1 640.5,342.4 642.9,339.8 645.3,337.2 647.7,334.6 650.2,331.8 652.6,329 655,326.1 657.4,323.3 659.8,320.5 662.2,317.6 664.6,314.4 667,311.2 669.4,308 671.8,304.9 674.3,301.7 676.7,298.5 679.1,295.4 681.5,292.4 683.9,289.6 686.3,286.8 688.7,284 691.1,281.2 693.5,278.7 695.9,276.6 698.4,274.5 700.8,272.4 703.2,270.2 705.6,268.6 708,267.7 1030,536.4 1027.1,539.6 1024.1,542.8 1021.2,546 1018.2,549.2 1015.3,552.6 1012.3,556.5 1009.4,560.5 1006.4,564.4 1003.5,568.3 1000.5,572.3 997.6,576.2 994.6,580.1 991.7,584 988.7,588 985.8,592 982.8,596.2 979.9,600.4 976.9,604.6 974,608.8 971,613 968.1,616.8 965.1,620.1 962.2,623.5 959.2,626.9 956.3,630.2 953.3,633.6 950.4,636.6 947.4,639.6 944.5,642.5 941.5,645.5 938.6,648.4 935.6,651.4 932.7,654.1 929.7,656.1 926.8,658.2 923.8,660.2 920.9,662.2 917.9,664.3 915,666.3"/></clipPath>
<path d="M542.6 282.9L536.5 266.9L541.5 262.1L549.6 259.8L558.5 257.9L567.8 256.3L577.1 254.4L586.5 252.5L595.9 250.3L605.4 247.6L614.9 244.9L624.4 242.2L634 240.2L643 237.7L647.4 232.6L646.6 223.1L640.4 211.3M554.7 294.8L548.7 278.8L553.7 274L561.8 271.7L570.8 269.8L580.1 268.1L589.5 266.2L598.9 264.2L608.4 261.9L617.9 259.1L627.5 256.3L637.1 253.5L646.7 251.5L655.7 248.8L660.2 243.7L659.4 234L653.3 222.1M566.8 306.8L560.8 290.8L565.9 286L574.1 283.6L583.1 281.7L592.5 280L601.9 277.9L611.4 275.9L620.9 273.5L630.5 270.6L640.1 267.7L649.7 264.9L659.4 262.7L668.5 260L673 254.7L672.3 244.9L666.1 232.8M578.9 318.8L573 302.8L578.1 297.9L586.3 295.5L595.4 293.5L604.8 291.8L614.3 289.7L623.8 287.6L633.4 285.1L643 282.1L652.7 279.2L662.3 276.2L672 274L681.2 271.1L685.8 265.7L685.1 255.9L679 243.6M591 330.7L585.1 314.8L590.3 309.9L598.6 307.4L607.7 305.4L617.2 303.6L626.7 301.5L636.3 299.3L645.9 296.7L655.6 293.6L665.2 290.6L675 287.6L684.7 285.2L693.9 282.3L698.6 276.7L697.9 266.8L691.9 254.3M603.1 342.7L597.3 326.7L602.5 321.8L610.8 319.3L620 317.3L629.5 315.4L639.1 313.2L648.7 311L658.4 308.3L668.1 305.2L677.8 302L687.6 299L697.4 296.5L706.7 293.4L711.4 287.7L710.8 277.7L704.8 265M615.2 354.7L609.5 338.7L614.7 333.8L623.1 331.2L632.3 329.1L641.9 327.2L651.5 325L661.2 322.7L670.9 319.9L680.6 316.7L690.4 313.5L700.2 310.3L710.1 307.8L719.4 304.6L724.1 298.7L723.6 288.6L717.7 275.8M627.3 366.6L621.6 350.7L626.9 345.7L635.3 343.1L644.6 341L654.2 339.1L663.9 336.8L673.6 334.4L683.4 331.5L693.2 328.2L703 324.9L712.9 321.7L722.8 319L732.1 315.8L736.9 309.7L736.4 299.5L730.5 286.5M639.4 378.6L633.8 362.7L639.1 357.6L647.6 355L656.9 352.9L666.5 350.9L676.3 348.5L686.1 346.2L695.9 343.1L705.7 339.7L715.6 336.3L725.5 333L735.5 330.3L744.9 326.9L749.7 320.7L749.2 310.4L743.4 297.3M651.5 390.5L645.9 374.7L651.3 369.6L659.8 366.9L669.2 364.7L678.9 362.7L688.7 360.3L698.5 357.9L708.4 354.7L718.3 351.2L728.2 347.8L738.2 344.4L748.2 341.5L757.6 338.1L762.5 331.7L762.1 321.3L756.3 308M663.7 402.5L658.1 386.6L663.5 381.5L672.1 378.8L681.5 376.6L691.2 374.5L701.1 372.1L710.9 369.6L720.9 366.3L730.8 362.7L740.8 359.2L750.8 355.8L760.9 352.8L770.3 349.2L775.3 342.8L774.9 332.3L769.2 318.8M675.8 414.5L670.2 398.6L675.7 393.5L684.3 390.7L693.8 388.5L703.6 386.3L713.5 383.8L723.4 381.3L733.4 377.9L743.3 374.2L753.4 370.6L763.4 367.1L773.5 364.1L783.1 360.4L788.1 353.8L787.7 343.2L782.1 329.5M687.9 426.4L682.4 410.6L687.9 405.4L696.6 402.6L706.1 400.4L715.9 398.2L725.9 395.6L735.8 393L745.8 389.5L755.9 385.8L766 382.1L776.1 378.5L786.2 375.3L795.8 371.6L800.8 364.8L800.6 354.1L794.9 340.3M700 438.4L694.5 422.6L700.1 417.4L708.8 414.5L718.4 412.2L728.3 410L738.3 407.4L748.3 404.7L758.3 401.1L768.4 397.3L778.6 393.5L788.7 389.9L798.9 386.6L808.5 382.7L813.6 375.8L813.4 365L807.8 351M712.1 450.4L706.7 434.5L712.3 429.3L721.1 426.4L730.7 424.1L740.6 421.8L750.7 419.1L760.7 416.4L770.8 412.8L781 408.8L791.1 404.9L801.4 401.2L811.6 397.8L821.3 393.9L826.4 386.8L826.2 375.9L820.7 361.8M724.2 462.3L718.9 446.5L724.5 441.2L733.3 438.3L743 436L753 433.6L763.1 430.9L773.2 428.1L783.3 424.4L793.5 420.3L803.7 416.4L814 412.6L824.3 409.1L834 405L839.2 397.8L839.1 386.8L833.6 372.5M736.3 474.3L731 458.5L736.7 453.2L745.6 450.2L755.3 447.8L765.3 445.4L775.5 442.7L785.6 439.8L795.8 436L806.1 431.8L816.3 427.8L826.6 423.9L837 420.4L846.7 416.2L852 408.8L851.9 397.7L846.5 383.3M748.4 486.3L743.2 470.5L748.9 465.1L757.8 462.1L767.6 459.7L777.7 457.2L787.8 454.5L798.1 451.6L808.3 447.6L818.6 443.3L828.9 439.2L839.3 435.3L849.7 431.6L859.5 427.3L864.8 419.8L864.7 408.7L859.3 394M760.5 498.2L755.3 482.5L761.2 477.1L770.1 474L779.9 471.6L790 469.1L800.2 466.2L810.5 463.3L820.8 459.2L831.1 454.8L841.5 450.7L851.9 446.7L862.3 442.9L872.2 438.5L877.5 430.8L877.6 419.6L872.2 404.8M772.6 510.2L767.5 494.4L773.4 489L782.3 485.9L792.2 483.5L802.4 480.9L812.6 478L823 475L833.3 470.8L843.7 466.4L854.1 462.1L864.5 458L875 454.2L884.9 449.7L890.3 441.8L890.4 430.5L885.1 415.5M784.7 522.1L779.6 506.4L785.6 501L794.6 497.8L804.5 495.3L814.7 492.7L825 489.8L835.4 486.7L845.8 482.4L856.2 477.9L866.7 473.5L877.2 469.4L887.7 465.4L897.7 460.8L903.1 452.9L903.2 441.4L898 426.3M796.8 534.1L791.8 518.4L797.8 512.9L806.8 509.7L816.8 507.2L827.1 504.5L837.4 501.5L847.8 498.4L858.3 494L868.8 489.4L879.3 485L889.8 480.7L900.4 476.7L910.4 472L915.9 463.9L916.1 452.3L910.9 437M808.9 546.1L803.9 530.4L810 524.8L819.1 521.6L829.1 519.1L839.4 516.3L849.8 513.3L860.3 510.1L870.8 505.6L881.3 500.9L891.9 496.4L902.5 492.1L913.1 487.9L923.2 483.1L928.7 474.9L928.9 463.2L923.7 447.8M821 558L816.1 542.3L822.2 536.8L831.4 533.5L841.4 530.9L851.8 528.2L862.2 525.1L872.7 521.8L883.3 517.2L893.9 512.4L904.5 507.8L915.1 503.5L925.8 499.2L935.9 494.3L941.5 485.9L941.7 474.1L936.6 458.5M833.2 570L828.3 554.3L834.4 548.7L843.6 545.4L853.7 542.8L864.1 540L874.6 536.8L885.2 533.5L895.8 528.8L906.4 523.9L917.1 519.3L927.7 514.8L938.5 510.5L948.6 505.5L954.2 496.9L954.6 485.1L949.5 469.3M845.3 582L840.4 566.3L846.6 560.7L855.9 557.3L866 554.7L876.5 551.8L887 548.6L897.6 545.3L908.3 540.4L918.9 535.4L929.6 530.7L940.4 526.2L951.2 521.7L961.4 516.6L967 507.9L967.4 496L962.4 480M857.4 593.9L852.6 578.3L858.8 572.6L868.1 569.2L878.3 566.6L888.8 563.6L899.4 560.4L910.1 557L920.8 552L931.5 547L942.2 542.1L953 537.5L963.8 533L974.1 527.8L979.8 518.9L980.2 506.9L975.3 490.8M869.5 605.9L864.7 590.3L871 584.6L880.4 581.1L890.6 578.4L901.2 575.4L911.8 572.1L922.5 568.7L933.2 563.6L944 558.5L954.8 553.6L965.7 548.9L976.5 544.2L986.8 538.9L992.6 529.9L993.1 517.8L988.1 501.5M881.6 617.8L876.9 602.2L883.2 596.5L892.6 593L902.9 590.3L913.5 587.2L924.2 583.9L935 580.4L945.7 575.2L956.6 570L967.4 565L978.3 560.3L989.2 555.5L999.6 550.1L1005.4 540.9L1005.9 528.7L1001 512.3M893.7 629.8L889 614.2L895.4 608.4L904.9 604.9L915.2 602.2L925.9 599.1L936.6 595.7L947.4 592.1L958.2 586.8L969.1 581.5L980 576.4L990.9 571.6L1001.9 566.8L1012.3 561.2L1018.2 551.9L1018.7 539.6L1013.9 523M905.8 641.8L901.2 626.2L907.6 620.4L917.1 616.8L927.5 614L938.2 610.9L949 607.4L959.8 603.8L970.7 598.4L981.6 593L992.6 587.9L1003.6 583L1014.6 578L1025 572.4L1030.9 563L1031.5 550.5L1026.8 533.8M917.9 653.7L913.3 638.2L919.8 632.3L929.4 628.7L939.8 625.9L950.6 622.7L961.4 619.2L972.3 615.5L983.2 610.1L994.2 604.5L1005.2 599.3L1016.2 594.4L1027.3 589.3L1037.8 583.6L1043.7 574L1044.4 561.5L1039.7 544.5M930 665.7L925.5 650.1L932 644.3L941.6 640.6L952.1 637.8L962.9 634.5L973.8 631L984.7 627.2L995.7 621.7L1006.7 616L1017.8 610.7L1028.8 605.7L1040 600.5L1050.5 594.7L1056.5 585L1057.2 572.4L1052.5 555.3M942.1 677.7L937.7 662.1L944.2 656.2L953.9 652.5L964.4 649.7L975.3 646.3L986.2 642.8L997.2 638.9L1008.2 633.3L1019.3 627.6L1030.4 622.2L1041.5 617.1L1052.6 611.8L1063.2 605.9L1069.3 596L1070 583.3L1065.4 566M954.2 689.6L949.8 674.1L956.4 668.2L966.1 664.4L976.7 661.5L987.6 658.2L998.6 654.5L1009.6 650.7L1020.7 644.9L1031.8 639.1L1043 633.6L1054.1 628.4L1065.3 623.1L1076 617L1082.1 607L1082.9 594.2L1078.3 576.7" fill="none" stroke="#8a2019" stroke-opacity="0.3" stroke-width="4.0" stroke-linejoin="round" clip-path="url(#cpA2)"/>
<clipPath id="cpA1"><polygon points="345,404.5 346.8,403 348.5,401.5 350.3,400 352.1,398.4 353.8,396.9 355.6,395.3 357.4,393.5 359.2,391.7 360.9,389.9 362.7,388.2 364.5,386.4 366.2,384.6 368,382.8 369.8,381 371.5,379.3 373.3,377.7 375.1,376.1 376.8,374.4 378.6,372.8 380.4,371.1 382.2,369.5 383.9,367.9 385.7,366.2 387.5,364.7 389.2,363.2 391,361.7 392.8,360.2 394.5,358.8 396.3,357.3 398.1,355.8 399.8,354.4 401.6,353.2 403.4,352.2 405.2,351.2 406.9,350.2 408.7,349.2 410.5,348.2 412.2,347.1 414,346.1 668,670.4 666.4,672.2 664.8,674 663.2,675.9 661.6,677.7 660,679.5 658.4,681.3 656.8,683.2 655.2,685 653.5,686.8 651.9,688.6 650.3,690.4 648.7,692.2 647.1,694.1 645.5,695.9 643.9,697.7 642.3,699.5 640.7,701.3 639.1,703.1 637.5,704.9 635.9,706.7 634.3,708.4 632.7,710 631.1,711.6 629.5,713.2 627.8,714.9 626.2,716.5 624.6,718.1 623,719.7 621.4,721.3 619.8,722.9 618.2,724.5 616.6,726.1 615,727.5 613.4,728.9 611.8,730.3 610.2,731.7 608.6,733.1 607,734.5 605.4,735.9"/></clipPath>
<path d="M281.9 312.2L275.9 295.8L279.3 290.8L285.3 289.2L292.1 288.5L299 288.2L306.1 288.3L313.1 288.4L320.1 288.7L327.1 288.9L334.1 289.6L341.1 290.3L348.1 290.9L354.5 291.5L357.4 288L356 279.2L350.5 265.1M293.6 327.1L287.5 310.7L290.9 305.7L297 304.2L303.7 303.5L310.7 303.2L317.6 303.3L324.6 303.5L331.6 303.7L338.6 303.9L345.6 304.5L352.6 305.2L359.6 305.8L366 306.3L368.9 302.8L367.5 293.9L361.9 279.7M305.3 342L299.2 325.7L302.6 320.7L308.6 319.2L315.3 318.5L322.3 318.2L329.2 318.3L336.2 318.5L343.2 318.7L350.2 318.9L357.1 319.5L364.1 320.1L371.1 320.7L377.5 321.1L380.3 317.5L378.9 308.5L373.4 294.2M317 357L310.9 340.6L314.3 335.7L320.2 334.1L327 333.6L333.9 333.2L340.8 333.3L347.8 333.5L354.8 333.7L361.7 333.9L368.7 334.5L375.6 335L382.5 335.6L389 336L391.8 332.3L390.4 323.2L384.8 308.8M328.7 371.9L322.6 355.6L325.9 350.6L331.9 349.1L338.6 348.6L345.5 348.3L352.4 348.4L359.4 348.5L366.3 348.7L373.3 348.9L380.2 349.4L387.1 350L394 350.5L400.5 350.8L403.2 347L401.8 337.9L396.2 323.4M340.4 386.8L334.2 370.5L337.6 365.6L343.5 364.1L350.2 363.6L357.1 363.3L364 363.4L371 363.6L377.9 363.7L384.8 363.9L391.7 364.4L398.6 364.9L405.5 365.4L411.9 365.7L414.7 361.8L413.3 352.5L407.7 338M352.1 401.8L345.9 385.4L349.2 380.6L355.2 379.1L361.8 378.6L368.7 378.3L375.6 378.4L382.5 378.6L389.5 378.8L396.4 378.9L403.3 379.3L410.2 379.8L417 380.3L423.4 380.5L426.2 376.5L424.7 367.2L419.1 352.6M363.8 416.7L357.6 400.4L360.9 395.6L366.8 394.1L373.5 393.6L380.3 393.3L387.2 393.5L394.1 393.6L401 393.8L407.9 393.9L414.8 394.3L421.7 394.8L428.5 395.2L434.9 395.3L437.6 391.3L436.2 381.9L430.5 367.2M375.5 431.6L369.3 415.3L372.6 410.5L378.5 409.1L385.1 408.6L391.9 408.4L398.8 408.5L405.7 408.7L412.6 408.8L419.5 408.9L426.3 409.3L433.2 409.7L440 410.1L446.4 410.2L449.1 406.1L447.6 396.6L441.9 381.8M387.2 446.6L381 430.3L384.2 425.5L390.1 424.1L396.7 423.6L403.5 423.4L410.4 423.5L417.3 423.7L424.1 423.8L431 423.9L437.8 424.2L444.7 424.6L451.5 425L457.9 425L460.6 420.8L459.1 411.2L453.4 396.4M398.9 461.5L392.6 445.2L395.9 440.5L401.8 439.1L408.4 438.6L415.2 438.4L422 438.5L428.9 438.7L435.7 438.8L442.5 438.9L449.4 439.2L456.2 439.5L463 439.9L469.3 439.9L472 435.6L470.5 425.9L464.8 411M410.5 476.4L404.3 460.1L407.5 455.4L413.4 454.1L420 453.6L426.8 453.4L433.6 453.6L440.4 453.7L447.3 453.8L454.1 453.9L460.9 454.2L467.7 454.5L474.5 454.8L480.8 454.7L483.5 450.3L482 440.6L476.2 425.6M422.2 491.3L416 475.1L419.2 470.4L425 469L431.6 468.6L438.4 468.5L445.2 468.6L452 468.8L458.8 468.8L465.6 468.9L472.4 469.1L479.2 469.4L486 469.6L492.3 469.5L495 465.1L493.4 455.3L487.7 440.2M433.9 506.3L427.7 490L430.9 485.4L436.7 484L443.2 483.6L450 483.5L456.8 483.6L463.6 483.8L470.4 483.8L477.2 483.9L484 484.1L490.7 484.3L497.5 484.5L503.8 484.4L506.4 479.8L504.8 469.9L499.1 454.8M445.6 521.2L439.3 505L442.5 500.4L448.3 499L454.9 498.6L461.6 498.5L468.4 498.7L475.2 498.8L481.9 498.8L488.7 498.8L495.5 499L502.3 499.2L509 499.4L515.3 499.2L517.9 494.6L516.3 484.6L510.5 469.3M457.3 536.1L451 519.9L454.2 515.3L460 514L466.5 513.6L473.2 513.5L480 513.7L486.7 513.8L493.5 513.8L500.3 513.8L507 514L513.8 514.2L520.5 514.3L526.7 514L529.3 509.4L527.7 499.3L522 483.9M469 551.1L462.7 534.8L465.8 530.3L471.6 529L478.1 528.6L484.8 528.6L491.6 528.7L498.3 528.9L505.1 528.9L511.8 528.8L518.5 529L525.3 529.1L532 529.2L538.2 528.9L540.8 524.1L539.2 514L533.4 498.5M480.7 566L474.4 549.8L477.5 545.3L483.3 544L489.8 543.6L496.4 543.6L503.2 543.7L509.9 543.9L516.6 543.9L523.4 543.8L530.1 543.9L536.8 544L543.5 544.1L549.7 543.7L552.3 538.9L550.6 528.6L544.8 513.1M492.4 580.9L486 564.7L489.2 560.2L494.9 559L501.4 558.7L508 558.6L514.8 558.8L521.5 558.9L528.2 558.9L534.9 558.8L541.6 558.9L548.3 559L555 559L561.2 558.6L563.7 553.6L562.1 543.3L556.2 527.7M504.1 595.8L497.7 579.7L500.8 575.2L506.6 574L513 573.7L519.7 573.6L526.4 573.8L533.1 574L539.8 573.9L546.5 573.8L553.1 573.9L559.8 573.9L566.5 573.9L572.7 573.4L575.2 568.4L573.5 558L567.7 542.3M515.8 610.8L509.4 594.6L512.5 590.2L518.2 589L524.6 588.7L531.3 588.7L537.9 588.8L544.6 589L551.3 588.9L558 588.8L564.7 588.8L571.3 588.8L578 588.8L584.1 588.2L586.7 583.1L585 572.7L579.1 556.9M527.5 625.7L521.1 609.5L524.1 605.2L529.8 603.9L536.3 603.7L542.9 603.7L549.5 603.9L556.2 604L562.9 603.9L569.5 603.8L576.2 603.8L582.8 603.7L589.5 603.7L595.6 603.1L598.1 597.9L596.4 587.3L590.5 571.5M539.2 640.6L532.8 624.5L535.8 620.1L541.5 618.9L547.9 618.7L554.5 618.7L561.1 618.9L567.8 619L574.4 618.9L581.1 618.8L587.7 618.7L594.3 618.7L601 618.6L607.1 617.9L609.6 612.6L607.9 602L602 586.1M550.9 655.6L544.4 639.4L547.5 635.1L553.1 633.9L559.5 633.7L566.1 633.7L572.7 633.9L579.4 634.1L586 633.9L592.6 633.8L599.3 633.7L605.9 633.6L612.5 633.5L618.6 632.8L621 627.4L619.3 616.7L613.4 600.7M562.6 670.5L556.1 654.4L559.1 650.1L564.8 648.9L571.1 648.7L577.7 648.8L584.3 648.9L590.9 649.1L597.6 648.9L604.2 648.8L610.8 648.7L617.4 648.5L624 648.4L630.1 647.6L632.5 642.2L630.8 631.4L624.8 615.3M574.3 685.4L567.8 669.3L570.8 665L576.4 663.9L582.8 663.7L589.3 663.8L595.9 664L602.5 664.1L609.1 664L615.7 663.8L622.3 663.6L628.9 663.5L635.5 663.3L641.5 662.4L644 656.9L642.2 646L636.3 629.9M585.9 700.3L579.5 684.2L582.5 680L588.1 678.9L594.4 678.7L600.9 678.8L607.5 679L614.1 679.2L620.7 679L627.3 678.8L633.8 678.6L640.4 678.4L647 678.2L653 677.3L655.4 671.7L653.6 660.7L647.7 644.5M597.6 715.3L591.1 699.2L594.1 695L599.7 693.9L606 693.7L612.5 693.8L619.1 694L625.7 694.2L632.3 694L638.8 693.8L645.4 693.5L651.9 693.3L658.4 693.1L664.5 692.1L666.9 686.4L665.1 675.4L659.1 659M609.3 730.2L602.8 714.1L605.8 710L611.4 708.9L617.7 708.7L624.2 708.8L630.7 709.1L637.3 709.2L643.8 709L650.4 708.8L656.9 708.5L663.4 708.2L669.9 707.9L676 706.9L678.4 701.2L676.5 690.1L670.5 673.6M621 745.1L614.5 729L617.4 724.9L623 723.9L629.3 723.7L635.8 723.9L642.3 724.1L648.8 724.2L655.4 724L661.9 723.8L668.4 723.5L674.9 723.2L681.4 722.8L687.5 721.8L689.8 715.9L688 704.7L682 688.2M632.7 760.1L626.2 744L629.1 739.9L634.6 738.8L640.9 738.7L647.4 738.9L653.9 739.1L660.4 739.3L666.9 739L673.4 738.7L680 738.4L686.4 738.1L692.9 737.7L698.9 736.6L701.3 730.7L699.4 719.4L693.4 702.8M644.4 775L637.9 758.9L640.8 754.9L646.3 753.8L652.5 753.7L659 753.9L665.5 754.1L672 754.3L678.5 754L685 753.7L691.5 753.4L698 753L704.4 752.6L710.4 751.5L712.7 745.5L710.9 734.1L704.8 717.4" fill="none" stroke="#7a1c16" stroke-opacity="0.16" stroke-width="4.0" stroke-linejoin="round" clip-path="url(#cpA1)"/>
<polygon points="261.7,409.5 268.9,413 276.1,416.6 283.3,419.8 519.8,764.3 512.5,761.4 505.2,758.4 498,756.5" fill="#6f1d19" fill-opacity=".22"/>
<polygon points="261.7,409.5 268.9,413 276.1,416.6 283.3,419.8 519.8,764.3 512.5,761.4 505.2,758.4 498,756.5" fill="url(#pChev)" fill-opacity=".75"/>
<polygon points="484.9,753.1 504.4,758.1 527.3,767.3 543.3,769.6 561.7,766.1 577.7,758.1 598.3,742.1 616.7,726 635,707.7 653.3,687.1 669.4,668.8 685.4,656.1 703.8,647 722.1,640.8 745,634.8 767.9,632.1 786.3,632.5 804.6,636.7 822.9,644.7 841.3,655 859.6,664.2 877.9,671 894,673.8 914,667 933.4,653.6 952.8,634.2 969.8,614.8 986.8,590.5 1001.4,571.1 1015.9,551.7 1030.5,535.9 1049.9,523.8 1069.3,518.9 1088.8,516.5 1108.2,517.2 1127.6,519.6 1137.3,518.9 1151.9,514 1164,510.9 1176.1,511.6 1188.3,517.2 1200.4,523.8 1212.6,527.9 1222.3,527.4 1232,520.1 1241.7,508 1251.4,493.4 1261.1,480 1264.8,474 1266,562 497.5,864.4" fill="url(#pFront)"/>
<polyline points="904.8,240 1265.6,473.6 1266.8,562" fill="none" stroke="#3a3f44" stroke-width="1.800"/>
</svg>
<!-- TITLE BAR -->
<div id="titlebar">
 <svg class="abs" style="left:2px;top:4px" width="21" height="20" viewBox="0 0 21 20"><rect x="0" y="0" width="20" height="19.500" rx="2" fill="#e5623a"/><path d="M0 2a2 2 0 0 1 2-2h17.500l-19.500 18z" fill="#5a8fa3"/><text x="10" y="15.500" font-family="Liberation Sans" font-weight="bold" font-size="15.500" fill="#fff" text-anchor="middle">B</text></svg>
 <div class="ttl">BONE3_positiv-Form-rough - BigRep Blade</div>
 <div class="abs" style="left:809px;top:0;width:301px;height:1px;background:#d0d0d0"></div>
 <div class="abs" style="left:809px;top:0;width:60px;height:1px;background:#26a69a"></div>
 <svg class="abs" style="left:1750px;top:0" width="170" height="29" viewBox="0 0 170 29" fill="none" stroke="#111" stroke-width="1.1">
  <path d="M14.500 13.500h12.500" shape-rendering="crispEdges"/>
  <path d="M73.500 11.500h8v8h-8zM76.500 11v-2.500h8v8h-2.500" shape-rendering="crispEdges"/>
  <path d="M132.300 8.300l11.700 11.700M144 8.300l-11.700 11.700"/>
 </svg>
</div>
<!-- MENU BAR -->
<div id="menubar">
 <span style="left:3px"><u>F</u>ile</span><span style="left:34px"><u>E</u>dit</span><span style="left:68px"><u>V</u>iew</span><span style="left:107px"><u>S</u>ettings</span><span style="left:167px">E<u>x</u>tensions</span><span style="left:243px">P<u>r</u>eferences</span><span style="left:326px"><u>H</u>elp</span>
</div>
<!-- HEADER -->
<div id="header">
 <svg class="abs" style="left:0;top:0" width="300" height="60" viewBox="0 54 300 60">
  <g fill="none" stroke="#fff" stroke-width="4.100" stroke-linecap="butt" transform="translate(14.300 0) scale(.945 1) translate(-13.800 0)">
   <!-- b -->
   <path d="M16.5 60v34"/><path d="M16.5 78c1-4 4-5.5 7-5.500c4.500 0 6.500 3 6.500 7.500v5c0 5-2.500 8.300-6.800 8.300c-3 0-5.500-1.300-6.700-3.300"/>
   <!-- i -->
   <path d="M38 73v21"/><path d="M38 61.500v5.500"/>
   <!-- g -->
   <path d="M55.500 72.500c-4.500 0-7 2.700-7 6.800c0 4 2.500 6.700 7 6.700s7-2.700 7-6.700c0-4.100-2.500-6.800-7-6.800z"/><path d="M50.500 85.500c-2 1.500-2.300 4 0 4.800l9 1.200c4 .6 5 3.400 4 6c-1 3-4 4.500-8.500 4.500c-5 0-8-1.800-8-5c0-2.300 1.500-3.800 3.500-4.500"/><path d="M60.500 73.500l5-1.500"/>
   <!-- r -->
   <path d="M72.500 73v21"/><path d="M72.500 79c1.500-4 4.500-6.300 9.500-6"/>
   <!-- e -->
   <path d="M86.500 83.500h13.500v-2.500c0-5-2.500-8.200-7-8.200c-4.800 0-7.300 3.500-7.300 8.200v4.500c0 4.800 2.800 7.800 7.600 7.800c2.800 0 5-.8 6.700-2"/>
   <!-- p -->
   <path d="M106.500 73v31"/><path d="M106.500 78c1-4 4-5.500 7-5.500c4.500 0 6.500 3 6.500 7.500v5c0 5-2.500 8.300-6.800 8.300c-3 0-5.500-1.300-6.700-3.300"/>
  </g>
  <rect x="126" y="60" width="129" height="43" fill="#fff"/>
  <text x="189.500" y="94" font-family="Liberation Sans" font-weight="bold" font-size="36" fill="#5e97a8" stroke="#5e97a8" stroke-width=".900" text-anchor="middle" textLength="112.500" lengthAdjust="spacingAndGlyphs">BLADE</text>
 </svg>
 <div class="t" style="left:855.500px;top:21px;font-size:15px;color:#fff;letter-spacing:-.100px">PREPARE</div>
 <div class="abs" style="left:963px;top:15px;width:131px;height:30px;background:#fff;border-radius:2px"></div>
 <div class="t" style="left:993.500px;top:21px;font-size:15px;color:#10102a;letter-spacing:-.100px">PREVIEW</div>
</div>
<!-- VIEW BAR -->
<div id="viewbar">
 <div class="t" style="left:14px;top:20px;font-size:17.3px;color:#8b8f93">View type</div>
 <div class="t" style="left:106px;top:20px;font-size:17.6px;color:#ececec">Layer view</div>
 <svg class="abs" style="left:381px;top:25px" width="12" height="8" viewBox="0 0 12 8"><path d="M1 1l5 5l5-5" fill="none" stroke="#e6e6e6" stroke-width="1.6"/></svg>
 <div class="abs" style="left:408px;top:0;width:1px;height:58px;background:#3f4348"></div>
 <div class="t" style="left:423px;top:20px;font-size:17.4px;color:#8b8f93">Color scheme</div>
 <div class="t" style="left:547px;top:20px;font-size:17.3px;color:#ececec">Line Type</div>
 <svg class="abs" style="left:1199px;top:25px" width="12" height="8" viewBox="0 0 12 8"><path d="M1 1l5 5l5-5" fill="none" stroke="#e6e6e6" stroke-width="1.6"/></svg>
</div>
<!-- SETUP BAR -->
<div id="setupbar">
 <svg class="abs" style="left:17px;top:16px" width="33" height="27" viewBox="0 0 33 27" fill="none" stroke="#fff" stroke-width="2.2">
  <path d="M1 5h13M23 5h9M1 13.500h19M29 13.500h3M1 22h6M16 22h16"/><circle cx="18.500" cy="5" r="3.300"/><circle cx="24.500" cy="13.500" r="3.300"/><circle cx="11.500" cy="22" r="3.300"/>
 </svg>
 <div class="t" style="left:60px;top:20px;font-size:17.4px;color:#f2f2f2">Visual - 0.6 m...Height - 0.6mm</div>
 <svg class="abs" style="left:317px;top:18px" width="24" height="24" viewBox="0 0 24 24"><rect x="0.500" y="0.500" width="23" height="23" rx="3.500" fill="#fff"/><g fill="#5e5e5e"><path d="M12 2.300l4.300 4.300l-4.300 4.300l-4.300-4.300zM12 13.100l4.300 4.300l-4.300 4.300l-4.300-4.300zM6.600 7.700l4.300 4.300l-4.300 4.300l-4.300-4.300zM17.400 7.700l4.300 4.300l-4.300 4.300l-4.300-4.300z"/><path d="M3.200 2.500h2.800l-2.800 2.800zM21 2.500v2.800l-2.800-2.800zM3.200 21.500v-2.800l2.800 2.800zM21 21.500h-2.800l2.800-2.800z" fill-opacity=".8"/></g></svg>
 <div class="t" style="left:352px;top:21px;font-size:16.6px;color:#f2f2f2">20%</div>
 <svg class="abs" style="left:396px;top:16px" width="24" height="25.500" viewBox="0 0 26 28" fill="none" stroke="#fff" stroke-width="2"><rect x="6.300" y="3.300" width="13" height="13" rx="2" transform="rotate(45 12.800 9.800)"/><path d="M2.200 27.500v-11M23.400 27.500v-11M7.500 27.500v-5.500M18.100 27.500v-5.500M12.800 27.500v-2.500" stroke-width="2.400"/></svg>
 <div class="t" style="left:431px;top:21px;font-size:16.9px;color:#f2f2f2">On</div>
 <svg class="abs" style="left:465px;top:16px" width="23.500" height="26" viewBox="0 0 26 29" fill="none" stroke="#fff" stroke-width="2.300"><path d="M13 1.500v13.500M7.200 9.500l5.800 5.800l5.800-5.800"/><path d="M2.600 13.500v5.500a2.500 2.500 0 0 0 2.500 2.500h15.800a2.500 2.500 0 0 0 2.500-2.500v-5.500"/><path d="M1.500 27h23" stroke-dasharray="2.500 2.600" stroke-width="2.400"/></svg>
 <div class="t" style="left:500px;top:21px;font-size:16.9px;color:#f2f2f2">On</div>
 <svg class="abs" style="left:541px;top:25px" width="12" height="8" viewBox="0 0 12 8"><path d="M1 1l5 5l5-5" fill="none" stroke="#e6e6e6" stroke-width="1.300"/></svg>
</div>
<!-- PRINT SETTINGS PANEL -->
<div id="ps">
 <div id="pshead"><div class="t" style="left:15px;top:12px;font-size:17.9px;color:#f4f4f4">Print settings</div>
  <svg class="abs" style="left:542px;top:17px" width="10" height="10" viewBox="0 0 10 10"><path d="M.5.500l9 9M9.500.500l-9 9" stroke="#f0f0f0" stroke-width="1.300"/></svg></div>
 <div class="t" style="left:15px;top:68px;font-size:17.6px;color:#f0f0f0">Profile</div>
 <div class="abs" style="left:133px;top:60px;width:420px;height:34px;border:1px solid #3f4348;border-radius:3px"></div>
 <div class="t" style="left:148px;top:70px;font-size:13.1px;color:#ededed">Visual - 0.6 mm Layer Height - 0.6mm</div>
 <svg class="abs" style="left:492px;top:70px" width="15" height="14" viewBox="0 0 15 14"><path d="M7.500 0l2.100 4.800l5.200.500l-3.900 3.500l1.100 5.100l-4.500-2.700l-4.500 2.700l1.100-5.100l-3.900-3.500l5.200-.500z" fill="#9a9a9a"/></svg>
 <svg class="abs" style="left:525px;top:73px" width="12" height="8" viewBox="0 0 12 8"><path d="M1 1l5 5l5-5" fill="none" stroke="#a8a8a8" stroke-width="1.200"/></svg>
 <!-- tabs -->
 <div class="abs" style="left:15px;top:109px;width:538px;height:336px;border:1px solid #3f4348;border-top:none;border-bottom:none"></div>
 <div class="abs" style="left:15px;top:109px;width:265px;height:40px;border:1px solid #3f4348;border-bottom:none;border-radius:3px 3px 0 0"></div>
 <div class="abs" style="left:279px;top:148px;width:274px;height:1px;background:#3f4348"></div>
 <div class="abs" style="left:288px;top:109px;width:265px;height:39px;background:#5e5e5e;border-radius:3px 3px 0 0"></div>
 <svg class="abs" style="left:135px;top:117px" width="27" height="27" viewBox="0 0 27 27"><circle cx="13.600" cy="12.700" r="10.800" fill="none" stroke="#e8e8e8" stroke-width="1.800"/><path d="M3.500 16.500l-1.200 8.500l6-3.500" fill="#e8e8e8"/><text x="13.800" y="17.300" font-family="Liberation Sans" font-size="11.500" fill="#e8e8e8" text-anchor="middle" letter-spacing="-.5">T0</text></svg>
 <svg class="abs" style="left:408px;top:117px" width="27" height="27" viewBox="0 0 27 27"><circle cx="13.600" cy="12.700" r="10.800" fill="#3a3a3e" stroke="#e8e8e8" stroke-width="1.800"/><path d="M3.500 16.500l-1.200 8.500l6-3.500" fill="#e8e8e8"/><text x="13.800" y="17.300" font-family="Liberation Sans" font-size="11.500" fill="#e8e8e8" text-anchor="middle" letter-spacing="-.5">T1</text></svg>
 <!-- search -->
 <div class="abs" style="left:30px;top:163px;width:441px;height:38px;border:1px solid #3f4348;border-radius:2px"></div>
 <svg class="abs" style="left:47px;top:173px" width="19" height="19" viewBox="0 0 19 19" fill="none" stroke="#e8e8e8" stroke-width="1.800"><circle cx="11.800" cy="7.200" r="5.700"/><path d="M7.800 11.200l-6.800 6.800"/></svg>
 <div class="t" style="left:83px;top:174px;font-size:14.3px;color:#c4c4c4;font-style:italic">Search settings</div>
 <div class="abs" style="left:489px;top:172px;width:23px;height:2px;background:#e8e8e8"></div><div class="abs" style="left:489px;top:181px;width:23px;height:2px;background:#e8e8e8"></div><div class="abs" style="left:489px;top:190px;width:23px;height:2px;background:#e8e8e8"></div>
 <!-- clipped list -->
 <div class="abs" style="left:0;top:216px;width:570px;height:228px;overflow:hidden">
  <div class="abs" style="left:30px;top:-21px;width:494px;height:30px;background:#4b5055"></div>
  <div class="abs" style="left:44px;top:3px;width:21px;height:2px;background:#b8b8b8;border-radius:0 0 2px 2px"></div><div class="abs" style="left:98px;top:2px;width:2px;height:3px;background:#d8d8d8"></div>
  <div class="row" style="top:10px"><div class="lbl" style="left:41px;font-size:13.600px">Top/Bottom Thickness</div><div class="box"></div><div class="val">2.4</div><div class="unit">mm</div></div>
  <div class="row" style="top:42px"><div class="lbl" style="left:62px;font-size:13px">Top Thickness</div><div class="box" style="border-color:#a4a6a8;background:#1f2327"></div><div class="val" style="color:#858585">2.4</div><div class="unit">mm</div></div>
  <div class="row" style="top:74px"><div class="lbl" style="left:83px;font-size:12.200px;font-style:italic">Top Layers</div>
   <svg class="abs" style="left:293px;top:7px" width="17" height="19" viewBox="0 0 17 19" fill="none" stroke="#9a9a9a" stroke-width="1.700"><path d="M4 5.800a6.700 6.700 0 1 1-2.600 5.400"/><path d="M7.500 1l-4 4.500l5 2.500" stroke-width="1.500"/></svg>
   <svg class="abs" style="left:325px;top:6px" width="18" height="21" viewBox="0 0 18 21" fill="none" stroke="#a8a8a8"><path d="M11.500 2.500c-2.200-1.500-4 .200-4.400 2.500l-2 11c-.400 2.300-2 3.500-3.800 2.500" stroke-width="1.700"/><path d="M3 8h7.500" stroke-width="1.500"/><path d="M11.500 13.500l4 4M15.500 13.500l-4 4" stroke-width="1.800"/></svg>
   <div class="box"></div><div class="val">5</div></div>
  <div class="row" style="top:106px"><div class="lbl" style="left:62px;font-size:13.400px">Bottom Thickness</div><div class="box"></div><div class="val">1.8</div><div class="unit">mm</div></div>
  <div class="row" style="top:138px"><div class="lbl" style="left:83px;font-size:13.500px">Bottom Layers</div><div class="box"></div><div class="val">3</div></div>
  <div class="abs" style="left:30px;top:171px;width:494px;height:30px;background:#4b5055"></div>
  <svg class="abs" style="left:44px;top:175px" width="24" height="24" viewBox="0 0 24 24"><rect x="0.500" y="0.500" width="23" height="23" rx="3.500" fill="#a9a9a9"/><g fill="#4b5055"><path d="M12 2.300l4.300 4.300l-4.300 4.300l-4.300-4.300zM12 13.100l4.300 4.300l-4.300 4.300l-4.300-4.300zM6.600 7.700l4.300 4.300l-4.300 4.300l-4.300-4.300zM17.400 7.700l4.300 4.300l-4.300 4.300l-4.300-4.300z"/><path d="M3.200 2.500h2.800l-2.800 2.800zM21 2.500v2.800l-2.800-2.800zM3.200 21.500v-2.800l2.800 2.800zM21 21.500h-2.800l2.800-2.800z" fill-opacity=".8"/></g></svg>
  <div class="t" style="left:90px;top:175px;font-size:19px;color:#d6d6d6;letter-spacing:.9px;-webkit-text-stroke:.45px #d6d6d6">Infill</div>
  <svg class="abs" style="left:495px;top:183px" width="12" height="8" viewBox="0 0 12 8"><path d="M1 1l5 5l5-5" fill="none" stroke="#a8a8a8" stroke-width="1.200"/></svg>
  <div class="row" style="top:202px"><div class="lbl" style="left:41px;font-size:13px;font-style:italic">Infill Density</div>
   <svg class="abs" style="left:293px;top:7px" width="17" height="19" viewBox="0 0 17 19" fill="none" stroke="#9a9a9a" stroke-width="1.700"><path d="M4 5.800a6.700 6.700 0 1 1-2.600 5.400"/><path d="M7.500 1l-4 4.500l5 2.500" stroke-width="1.500"/></svg>
   <svg class="abs" style="left:325px;top:6px" width="18" height="21" viewBox="0 0 18 21" fill="none" stroke="#a8a8a8"><path d="M11.500 2.500c-2.200-1.500-4 .200-4.400 2.500l-2 11c-.400 2.300-2 3.500-3.800 2.500" stroke-width="1.700"/><path d="M3 8h7.500" stroke-width="1.500"/><path d="M11.500 13.500l4 4M15.500 13.500l-4 4" stroke-width="1.800"/></svg>
   <div class="box"></div><div class="val">20.0</div><div class="unit" style="font-size:12px">%</div></div>
 </div>
 <div class="abs" style="left:533px;top:277px;width:11px;height:88px;border-radius:5.500px;background:#7f8488"></div>
 <div class="abs" style="left:0;top:444px;width:570px;height:1px;background:#3f4348"></div>
 <!-- recommended -->
 <div class="abs" style="left:15px;top:460px;width:175px;height:38px;border:1px solid #fff;border-radius:1px"></div>
 <svg class="abs" style="left:34px;top:473px" width="8" height="12" viewBox="0 0 8 12"><path d="M6.500 1l-5 5l5 5" fill="none" stroke="#f0f0f0" stroke-width="1.400"/></svg>
 <div class="t" style="left:53px;top:469px;font-size:17.900px;color:#fafafa">Recommended</div>
 <div class="abs" style="left:0;top:513px;width:570px;height:10px;background:#5e5e5e"></div>
 <div class="abs" style="left:278px;top:517px;width:2px;height:1px;background:#8a8a8a"></div><div class="abs" style="left:283px;top:517px;width:2px;height:1px;background:#8a8a8a"></div><div class="abs" style="left:288px;top:517px;width:2px;height:1px;background:#8a8a8a"></div>
</div>
<!-- LEFT TOOLS -->
<div id="tools">
 <svg class="abs" style="left:0;top:0" width="62" height="422" viewBox="0 292 62 422" fill="none" stroke="#585c60" stroke-width="2.400">
  <!-- move -->
  <path d="M20.500 323h21M31 312.500v21"/><path d="M27 316.500l4-4l4 4M27 329.500l4 4l4-4M24.500 319l-4 4l4 4M37.500 319l4 4l-4 4"/>
  <!-- scale -->
  <path d="M25 373.500h-3.500v-.500a2 2 0 0 1 2-2h16a2 2 0 0 1 2 2v19a2 2 0 0 1-2 2h-7.500" /><rect x="20.800" y="385.800" width="8.400" height="8.400" rx="1"/><path d="M29 385l8-8M31.500 376.500h6v6"/>
  <!-- rotate -->
  <path d="M22 439.500c4-5 11-6 15.500-2.500c4 3 5 7.500 4.200 10.500"/><path d="M22.200 432v7.800h8" /><path d="M40.800 449.500a11 11 0 0 1-19.500-4" stroke-dasharray="1.800 3.400" stroke-width="2"/>
  <!-- mirror -->
  <path d="M31 492v23" stroke-dasharray="2 2.600"/><path d="M19.500 496l7.500 7l-7.500 7z" stroke-width="1.800"/><path d="M42.500 496l-7.500 7l7.500 7z" fill="#585c60" stroke-width="1.800"/>
  <!-- mesh -->
  <rect x="21.200" y="553.200" width="8" height="8" rx="1" stroke-width="2"/><rect x="33.200" y="565.200" width="8" height="8" rx="1" stroke-width="2"/><path d="M20.200 564.200h10v10h-6a4 4 0 0 1-4-4z" fill="#585c60" stroke="none"/><path d="M32.500 560l7-7.500M35.500 562l6.500-7" stroke-width="2"/>
  <!-- blocker -->
  <path d="M19.500 611.500h8v8h7.500v7.500h7.500v7.500h-23z" fill="#585c60" stroke="none"/>
  <!-- eraser -->
  <path d="M31 671.500l8.500 8.500l-8.500 8.500l-8.500-8.500z" stroke-width="2"/><path d="M21 683v10.500M25.500 689v4.500M30.500 691v2.500" stroke-width="2"/><path d="M36.500 688.500l5 5M41.500 688.500l-5 5" stroke-width="2"/>
 </svg>
</div>
<div id="tools2">
 <svg class="abs" style="left:0;top:0" width="62" height="122" viewBox="0 727 62 122" fill="none" stroke="#484c50" stroke-width="1.800">
  <circle cx="31.500" cy="757" r="11"/><path d="M21 761l-1.200 8.500l6-3.300" fill="#484c50" stroke="none"/><text x="31.500" y="761.500" font-family="Liberation Sans" font-size="11.500" fill="#484c50" stroke="none" text-anchor="middle" letter-spacing="-.5">T0</text>
  <circle cx="31.500" cy="817.500" r="11"/><path d="M21 821.500l-1.200 8.500l6-3.300" fill="#484c50" stroke="none"/><text x="31.500" y="822" font-family="Liberation Sans" font-size="11.500" fill="#484c50" stroke="none" text-anchor="middle" letter-spacing="-.5">T1</text>
 </svg>
</div>
<!-- OBJECT LIST -->
<svg class="abs" style="left:79px;top:888px" width="13" height="8" viewBox="0 0 13 8"><path d="M1 7l5.500-5.500l5.500 5.500" fill="none" stroke="#c6c6c6" stroke-width="1.200"/></svg>
<div class="t" style="left:108px;top:885px;font-size:13.200px;color:#ebebeb">Object list</div>
<svg class="abs" style="left:78px;top:920px" width="18" height="18" viewBox="0 0 18 18"><path d="M4 11.500l8.500-8.500l2.500 2.500l-8.500 8.500l-3.300.800z" fill="#cfcfcf"/><path d="M1 16.500h15.500" stroke="#cfcfcf" stroke-width="1.300"/></svg>
<div class="t" style="left:111px;top:921px;font-size:13.300px;color:#d6d6d6">BONE3_positiv-Form-rough</div>
<div class="t" style="left:76px;top:952px;font-size:12.500px;color:#dcdcdc">304.4 x 359.4 x 59.1 mm</div>
<svg class="abs" style="left:76px;top:984px" width="184" height="32" viewBox="76 984 184 32" fill="none" stroke="#d4d4d4" stroke-width="2.300" stroke-linejoin="round">
 <path d="M91 988.500l10 5.500v11.500l-10 5.500l-10-5.500v-11.500zM81 994l10 5.500l10-5.500M91 999.500v11.500"/>
 <path d="M119 994.500l4.500-5h15.500v16l-4.500 5.500h-15.500z" /><path d="M119 994.500h15.500v16.500h-15.500z" fill="#d4d4d4"/><path d="M134.500 994.500l4.500-5"/>
 <path d="M157 994.500l4.500-5h15.500v16l-4.500 5.500h-15.500z"/><path d="M157 994.500l4.500-5h15.500l-4.500 5z" fill="#d4d4d4"/><path d="M157 994.500h15.500v16.500M172.500 994.500l4.500-5"/>
 <path d="M195 989.500h15.500l4.500 5v16.500h-15.500l-4.500-5.500z"/><path d="M195 989.500l4.500 5v16.500l-4.500-5.500z" fill="#d4d4d4"/><path d="M199.500 994.500h15.500"/>
 <path d="M233 994.500l4.500-5h15.500v16l-4.500 5.500h-15.500z"/><path d="M248.500 994.500l4.500-5v16l-4.500 5.500z" fill="#d4d4d4"/><path d="M233 994.500h15.500v16.500"/>
</svg>
<!-- SIM SLIDER -->
<svg class="abs" style="left:615px;top:990px" width="545" height="30" viewBox="615 990 545 30"><path d="M620.500 996.500l12 7.500l-12 7.500z" fill="none" stroke="#fff" stroke-width="1.800" stroke-linejoin="miter"/><rect x="652" y="1000" width="490" height="8" rx="3" fill="#f3f3f3"/><circle cx="1140" cy="1004" r="11" fill="#fff"/></svg>
<!-- LAYER SLIDER -->
<div class="abs" style="left:1878.500px;top:225px;width:29px;height:22.500px;background:#272b30;border:1px solid #3b3f44;border-radius:1px"></div>
<div class="abs" style="left:1889.500px;top:243.500px;width:8px;height:8px;background:#272b30;transform:rotate(45deg)"></div>
<div class="t" style="left:1886px;top:229px;font-size:13.400px;color:#f0f0f0">98</div>
<div class="abs" style="left:1890px;top:266px;width:8px;height:490px;background:#f3f3f3"></div>
<div class="abs" style="left:1883px;top:255.500px;width:22px;height:22px;border-radius:11px;background:#41b8f5"></div>
<div class="abs" style="left:1883px;top:743.500px;width:22px;height:22px;border-radius:11px;background:#fff"></div>
<!-- SAVE BOX -->
<div id="save">
 <svg class="abs" style="left:27px;top:22px" width="28" height="28" viewBox="0 0 28 28" fill="none" stroke="#fff" stroke-width="2.200"><circle cx="13.700" cy="13.700" r="11.300"/><path d="M13.700 6.500v8h6.500"/></svg>
 <div class="t" style="left:64px;top:26px;font-size:17.300px;font-weight:bold;color:#e6e6e6">1 day 1 hour 58 minutes</div>
 <svg class="abs" style="left:335px;top:22px" width="28" height="28" viewBox="0 0 28 28" fill="none" stroke="#fff" stroke-width="2.200"><circle cx="13.700" cy="13.700" r="11.300"/><path d="M13.700 12v8.500" stroke-width="2.500"/><circle cx="13.700" cy="8" r="1.500" fill="#fff" stroke="none"/></svg>
 <svg class="abs" style="left:27px;top:63px" width="28" height="28" viewBox="0 0 28 28" fill="none" stroke="#fff" stroke-width="2.200"><circle cx="14" cy="13.200" r="10.800"/><path d="M3.800 17l-1.300 9.500l7-4" fill="#fff" stroke="none"/><circle cx="13.500" cy="13.800" r="3.200" stroke-width="2"/><path d="M16.500 8.500l2.500-1.300" stroke-width="2"/></svg>
 <div class="t" style="left:64px;top:70px;font-size:12.600px;color:#e0e0e0">1958g · 236.07m</div>
 <div class="abs" style="left:25px;top:102px;width:339px;height:38px;background:#196ef0"></div>
 <div class="t" style="left:146px;top:113px;font-size:16.900px;color:#fff">Save to Disk</div>
</div>
</body></html>
